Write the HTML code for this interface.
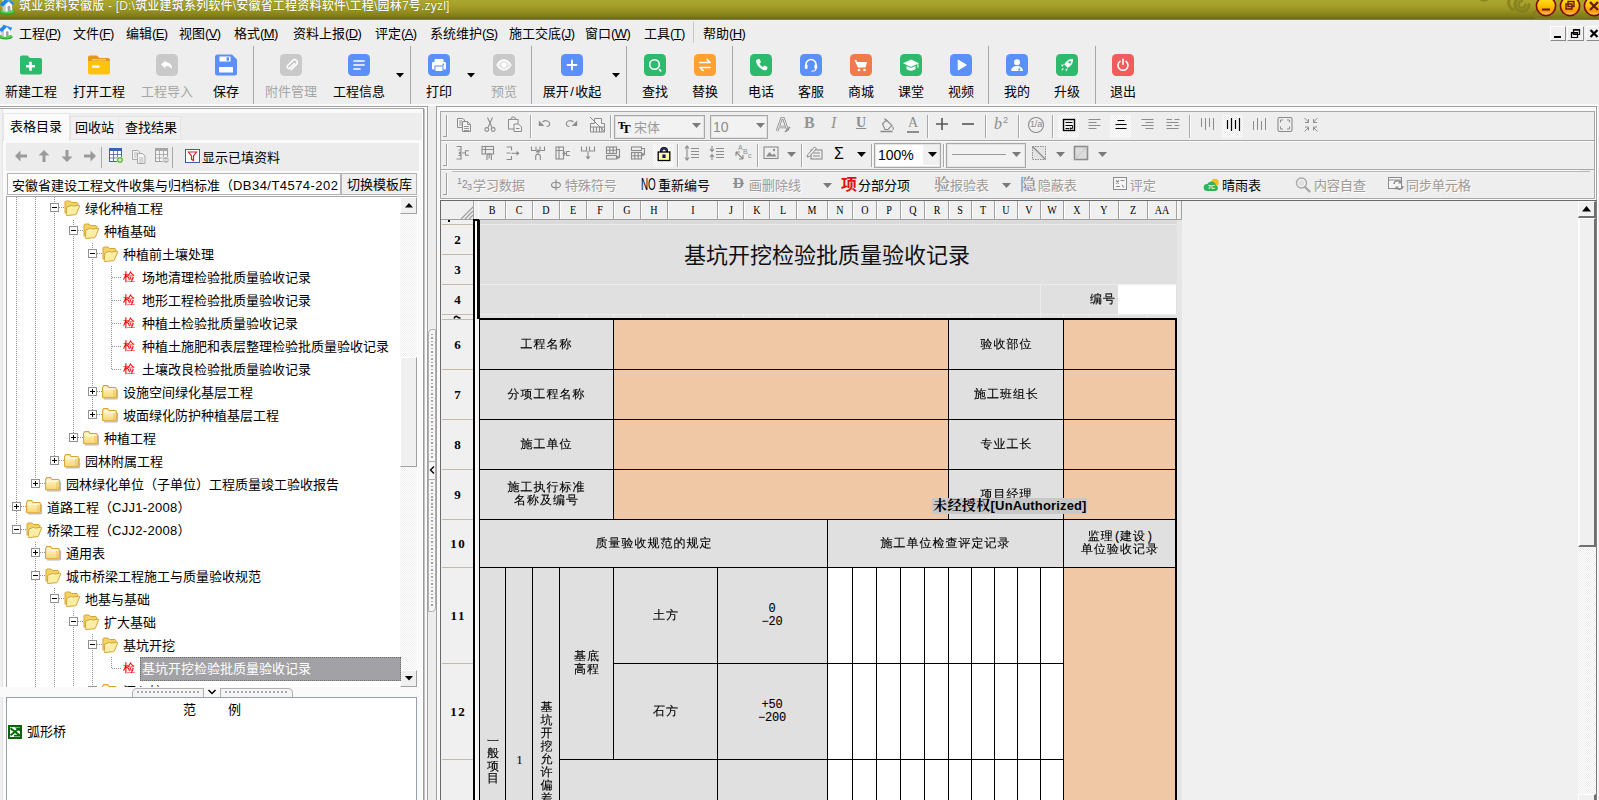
<!DOCTYPE html>
<html lang="zh-CN"><head><meta charset="utf-8"><title>筑业资料安徽版</title>
<style>
html,body{margin:0;padding:0;}
body{width:1599px;height:800px;overflow:hidden;position:relative;background:#f0f0f0;
 font-family:"Liberation Sans","Noto Sans CJK SC",sans-serif;font-size:13px;color:#000;}
div{position:absolute;box-sizing:border-box;}
.t{white-space:nowrap;line-height:1;}
.c{white-space:nowrap;line-height:1;transform:translateX(-50%);}
svg{position:absolute;overflow:visible;}
.song{font-family:"Liberation Serif","Noto Serif CJK SC",serif;font-weight:500;}
.bm{font-family:"Liberation Mono","WenQuanYi Zen Hei","Noto Sans CJK SC",sans-serif;-webkit-text-stroke:.12px currentColor;}
</style></head>
<body>
<div style="left:0px;top:0px;width:1599px;height:20px;background:linear-gradient(#aba62e 0%,#a49f28 30%,#928d1f 60%,#7f7b17 82%,#6d6a1e 93%,#8e8e74 100%);"></div>
<div style="left:0px;top:20px;width:1599px;height:25px;background:#eeeeee;"></div>
<div style="left:0px;top:45px;width:1599px;height:61px;background:#eeeeee;"></div>
<div style="left:0px;top:104px;width:1599px;height:2px;background:#fafafa;"></div>
<div style="left:0px;top:106px;width:1599px;height:2px;background:#ededed;"></div>
<div style="left:0px;top:106px;width:428px;height:1px;background:#a0a0a0;"></div>
<div style="left:0px;top:107px;width:427px;height:1px;background:#ffffff;"></div>
<div style="left:0px;top:108px;width:428px;height:692px;background:#f0f0f0;"></div>
<div style="left:436px;top:106px;width:1161px;height:694px;background:#fafafa;border:1px solid #a0a0a0;border-bottom:none;"></div>
<svg style="left:0px;top:-1px" width="16.0" height="16.0" viewBox="0 0 16 16"><ellipse cx="7.300" cy="13" rx="7.500" ry="2.700" fill="#2a9a2a"/><ellipse cx="7.300" cy="12.400" rx="7" ry="2.200" fill="#4fd04f"/><path d="M2.200 6.500L5.200 4.500L5.600 13L2.600 11.500Z" fill="#c9c9d6"/><path d="M5.200 5L8.500 1.800L12 4.500L12.200 11L5.600 13Z" fill="#fdfdfd"/><path d="M7.600 8.200c.3-1.600 2.300-2 2.700-.5L10.500 11.500L7.800 12.300Z" fill="#9c9cae"/><path d="M-.2 5.600L4.600 -.4L14.200 3L12.600 6.200L8.600 2.300L3.200 7.600Z" fill="#1f86ea"/><path d="M4.600 -.4L14.200 3L13.800 3.800L4.300 .6Z" fill="#4aa4f4"/><path d="M2.400 -1h1.600v2.500l-1.600 1.500Z" fill="#e8e8ee"/></svg>
<div class="t" style="left:19px;top:0px;color:#fff;font-size:12px;font-weight:500;letter-spacing:.2px;text-shadow:0 0 1px rgba(60,60,0,.8);">筑业资料安徽版 - [D:\筑业建筑系列软件\安徽省工程资料软件\工程\园林7号.zyzl]</div>
<svg style="left:1460px;top:0" width="139" height="20" viewBox="1460 0 139 20"><g fill="none" stroke="#827d1d" stroke-linecap="round" opacity=".8"><path d="M1529 4.500a7 7 0 1 1-7-7" stroke-width="3.200"/><path d="M1525.500 4.500a3.500 3.500 0 1 1-3.500-3.500" stroke-width="2.400"/><path d="M1509.500 -1c-2 4-.5 8 3 10.500" stroke-width="3"/><path d="M1480 -1q4 3 8 0" stroke-width="2"/><path d="M1540 12.500a3.500 3.500 0 1 0-3 5.500q20 1.500 62 -2" stroke-width="2"/></g></svg>
<svg style="left:1535px;top:-5.500px" width="22" height="22" viewBox="-11 -11 22 22"><defs><linearGradient id="yb1546" x1="0" y1="0" x2="0" y2="1"><stop offset="0" stop-color="#ffe838"/><stop offset=".45" stop-color="#ffc600"/><stop offset=".78" stop-color="#ff9a00"/><stop offset="1" stop-color="#ffdc98"/></linearGradient></defs><circle r="9.600" fill="url(#yb1546)" stroke="#7a0c08" stroke-width="1.600"/><rect x="-4" y="2.5" width="8" height="2" fill="#6a1a00"/></svg>
<svg style="left:1559px;top:-5.500px" width="22" height="22" viewBox="-11 -11 22 22"><defs><linearGradient id="yb1570" x1="0" y1="0" x2="0" y2="1"><stop offset="0" stop-color="#ffe838"/><stop offset=".45" stop-color="#ffc600"/><stop offset=".78" stop-color="#ff9a00"/><stop offset="1" stop-color="#ffdc98"/></linearGradient></defs><circle r="9.600" fill="url(#yb1570)" stroke="#7a0c08" stroke-width="1.600"/><path d="M-2 -4.5h6v5h-6z M-4 -2h6v5h-6z" fill="none" stroke="#6a1a00" stroke-width="1.4"/></svg>
<svg style="left:1583px;top:-5.500px" width="22" height="22" viewBox="-11 -11 22 22"><defs><linearGradient id="yb1594" x1="0" y1="0" x2="0" y2="1"><stop offset="0" stop-color="#ffe838"/><stop offset=".45" stop-color="#ffc600"/><stop offset=".78" stop-color="#ff9a00"/><stop offset="1" stop-color="#ffdc98"/></linearGradient></defs><circle r="9.600" fill="url(#yb1594)" stroke="#7a0c08" stroke-width="1.600"/><path d="M-4 -4L4 4M4 -4L-4 4" stroke="#6a1a00" stroke-width="2.4"/></svg>
<svg style="left:-1px;top:25px" width="14.72" height="14.72" viewBox="0 0 16 16"><ellipse cx="7.300" cy="13" rx="7.500" ry="2.700" fill="#2a9a2a"/><ellipse cx="7.300" cy="12.400" rx="7" ry="2.200" fill="#4fd04f"/><path d="M2.200 6.500L5.200 4.500L5.600 13L2.600 11.500Z" fill="#c9c9d6"/><path d="M5.200 5L8.500 1.800L12 4.500L12.200 11L5.600 13Z" fill="#fdfdfd"/><path d="M7.600 8.200c.3-1.600 2.300-2 2.700-.5L10.500 11.500L7.800 12.300Z" fill="#9c9cae"/><path d="M-.2 5.600L4.600 -.4L14.200 3L12.600 6.200L8.600 2.300L3.200 7.600Z" fill="#1f86ea"/><path d="M4.600 -.4L14.200 3L13.800 3.800L4.300 .6Z" fill="#4aa4f4"/><path d="M2.400 -1h1.600v2.500l-1.600 1.500Z" fill="#e8e8ee"/></svg>
<div class="t" style="left:19px;top:27px;font-size:13px;">工程<span style="letter-spacing:-.6px">(<u>P</u>)</span></div>
<div class="t" style="left:73px;top:27px;font-size:13px;">文件<span style="letter-spacing:-.6px">(<u>F</u>)</span></div>
<div class="t" style="left:126px;top:27px;font-size:13px;">编辑<span style="letter-spacing:-.6px">(<u>E</u>)</span></div>
<div class="t" style="left:179px;top:27px;font-size:13px;">视图<span style="letter-spacing:-.6px">(<u>V</u>)</span></div>
<div class="t" style="left:234px;top:27px;font-size:13px;">格式<span style="letter-spacing:-.6px">(<u>M</u>)</span></div>
<div class="t" style="left:293px;top:27px;font-size:13px;">资料上报<span style="letter-spacing:-.6px">(<u>D</u>)</span></div>
<div class="t" style="left:375px;top:27px;font-size:13px;">评定<span style="letter-spacing:-.6px">(<u>A</u>)</span></div>
<div class="t" style="left:430px;top:27px;font-size:13px;">系统维护<span style="letter-spacing:-.6px">(<u>S</u>)</span></div>
<div class="t" style="left:509px;top:27px;font-size:13px;">施工交底<span style="letter-spacing:-.6px">(<u>J</u>)</span></div>
<div class="t" style="left:585px;top:27px;font-size:13px;">窗口<span style="letter-spacing:-.6px">(<u>W</u>)</span></div>
<div class="t" style="left:644px;top:27px;font-size:13px;">工具<span style="letter-spacing:-.6px">(<u>T</u>)</span></div>
<div class="t" style="left:703px;top:27px;font-size:13px;">帮助<span style="letter-spacing:-.6px">(<u>H</u>)</span></div>
<div style="left:693px;top:22px;width:1px;height:21px;background:#c8c8c8;"></div>
<div style="left:1550px;top:26px;width:16px;height:15px;background:#f0f0f0;border-right:1px solid #8a8a8a;border-bottom:1px solid #8a8a8a;border-top:1px solid #fff;border-left:1px solid #fff;"><svg style="left:0;top:-1px" width="16" height="15"><rect x="3" y="10" width="7" height="2" fill="#000"/></svg></div>
<div style="left:1567px;top:26px;width:17px;height:15px;background:#f0f0f0;border-right:1px solid #8a8a8a;border-bottom:1px solid #8a8a8a;border-top:1px solid #fff;border-left:1px solid #fff;"><svg style="left:0;top:-1px" width="17" height="15"><path d="M5.5 3.5h6v5h-6z M3.5 6.500h6v5h-6z" fill="#f0f0f0" stroke="#000" stroke-width="1.2"/><path d="M5.5 4h6 M3.500 7h6" stroke="#000" stroke-width="1.6"/></svg></div>
<div style="left:1586px;top:26px;width:14px;height:15px;background:#f0f0f0;border-right:1px solid #8a8a8a;border-bottom:1px solid #8a8a8a;border-top:1px solid #fff;border-left:1px solid #fff;"><svg style="left:0;top:-1px" width="14" height="15"><path d="M3.5 4L10.5 11M10.5 4L3.500 11" stroke="#000" stroke-width="2.2"/></svg></div>
<svg style="left:20px;top:54px" width="22" height="22" viewBox="0 0 22 22"><path d="M0 3.5a2 2 0 0 1 2-2h5.500l2.500 2.500h10a2 2 0 0 1 2 2v12.500a2 2 0 0 1-2 2h-18a2 2 0 0 1-2-2z" fill="#2dba6c"/><path d="M10.500 7.700v9M6 12.200h9" stroke="#fff" stroke-width="2.600" fill="none"/></svg>
<div class="c" style="left:31px;top:85px;font-size:13px;color:#000;">新建工程</div>
<svg style="left:88px;top:54px" width="22" height="22" viewBox="0 0 22 22"><path d="M0 3.500a2 2 0 0 1 2-2h7l2.500 2.500h8.500a2 2 0 0 1 2 2v3h-22z" fill="#e39a12"/><path d="M0 7h22v11.500a2 2 0 0 1-2 2h-18a2 2 0 0 1-2-2z" fill="#ffc20e"/><rect x="4" y="11.500" width="7.500" height="2.200" fill="#fff"/><rect x="4" y="5.300" width="14" height="1" fill="#fbe3a6"/></svg>
<div class="c" style="left:99px;top:85px;font-size:13px;color:#000;">打开工程</div>
<svg style="left:156px;top:54px" width="22" height="22" viewBox="0 0 22 22"><rect x="0" y="0" width="22" height="22" rx="4.5" fill="#c9c9c9"/><path d="M9.500 6.500L5 10.500l4.500 4v-2.600c3.500-.2 5.500 1 6.500 3.600c.3-4.500-2-7.200-6.500-7.600z" fill="#fff"/></svg>
<div class="c" style="left:167px;top:85px;font-size:13px;color:#a6a6a6;">工程导入</div>
<svg style="left:215px;top:54px" width="22" height="22" viewBox="0 0 22 22"><path d="M0 3a2.500 2.500 0 0 1 2.500-2.500h14.500l5 5v13.500a2.500 2.500 0 0 1-2.500 2.500h-17a2.500 2.500 0 0 1-2.500-2.500z" fill="#5b8ff9"/><rect x="4.500" y="2.500" width="11" height="5" fill="#fff"/><rect x="11.500" y="3.300" width="2.500" height="3.400" fill="#5b8ff9"/><rect x="4" y="13" width="14" height="5.500" fill="#fff"/></svg>
<div class="c" style="left:226px;top:85px;font-size:13px;color:#000;">保存</div>
<svg style="left:280px;top:54px" width="22" height="22" viewBox="0 0 22 22"><rect x="0" y="0" width="22" height="22" rx="4.5" fill="#c9c9c9"/><path d="M14.500 9.500l-4.600 4.600a1.700 1.700 0 0 1-2.400-2.400l5.400-5.400a2.700 2.700 0 0 1 3.800 3.800l-5.600 5.600" fill="none" stroke="#fff" stroke-linecap="round" stroke-linejoin="round" stroke-width="1.500"/></svg>
<div class="c" style="left:291px;top:85px;font-size:13px;color:#a6a6a6;">附件管理</div>
<svg style="left:348px;top:54px" width="22" height="22" viewBox="0 0 22 22"><rect x="0" y="0" width="22" height="22" rx="4.5" fill="#5b8ff9"/><path d="M6 7h10M6 11h10M6 15h6" fill="none" stroke="#fff" stroke-linecap="round" stroke-linejoin="round" stroke-width="1.700"/></svg>
<div class="c" style="left:359px;top:85px;font-size:13px;color:#000;">工程信息</div>
<svg style="left:428px;top:54px" width="22" height="22" viewBox="0 0 22 22"><rect x="0" y="0" width="22" height="22" rx="4.5" fill="#5b8ff9"/><rect x="6.500" y="5" width="9" height="4" rx=".8" fill="#fff"/><rect x="4" y="8" width="14" height="7.500" rx="1.300" fill="#fff"/><rect x="7" y="12" width="8" height="5.500" fill="#fff" stroke="#5b8ff9" stroke-width="1"/><circle cx="15.300" cy="10.300" r=".9" fill="#5b8ff9"/></svg>
<div class="c" style="left:439px;top:85px;font-size:13px;color:#000;">打印</div>
<svg style="left:493px;top:54px" width="22" height="22" viewBox="0 0 22 22"><rect x="0" y="0" width="22" height="22" rx="4.5" fill="#c9c9c9"/><path d="M4 11c2-3.500 4.500-5 7-5s5 1.500 7 5c-2 3.500-4.500 5-7 5s-5-1.500-7-5z" fill="#e9e9e9" stroke="#fff" stroke-width="1.300"/><circle cx="11" cy="11" r="2.300" fill="#fff"/></svg>
<div class="c" style="left:504px;top:85px;font-size:13px;color:#a6a6a6;">预览</div>
<svg style="left:561px;top:54px" width="22" height="22" viewBox="0 0 22 22"><rect x="0" y="0" width="22" height="22" rx="4.5" fill="#5b8ff9"/><path d="M11 6.500v9M6.500 11h9" fill="none" stroke="#fff" stroke-linecap="round" stroke-linejoin="round" stroke-width="1.800"/></svg>
<div class="c" style="left:572px;top:85px;font-size:13px;color:#000;">展开<span style="padding:0 1.500px">/</span>收起</div>
<svg style="left:644px;top:54px" width="22" height="22" viewBox="0 0 22 22"><rect x="0" y="0" width="22" height="22" rx="4.5" fill="#2dba6c"/><circle cx="10.500" cy="10.500" r="4.800" fill="none" stroke="#fff" stroke-linecap="round" stroke-linejoin="round" stroke-width="1.600"/><path d="M15.500 15.700l1.200 1.200" fill="none" stroke="#fff" stroke-linecap="round" stroke-linejoin="round" stroke-width="1.800"/></svg>
<div class="c" style="left:655px;top:85px;font-size:13px;color:#000;">查找</div>
<svg style="left:694px;top:54px" width="22" height="22" viewBox="0 0 22 22"><rect x="0" y="0" width="22" height="22" rx="4.5" fill="#ffa033"/><path d="M6 8.500h10M13 5.500l3 3M16 13.500h-10M9 16.500l-3-3" fill="none" stroke="#fff" stroke-linecap="round" stroke-linejoin="round" stroke-width="1.700"/></svg>
<div class="c" style="left:705px;top:85px;font-size:13px;color:#000;">替换</div>
<svg style="left:750px;top:54px" width="22" height="22" viewBox="0 0 22 22"><rect x="0" y="0" width="22" height="22" rx="4.5" fill="#2dba6c"/><path d="M7.300 5.500l2.200-.6 1.500 3.300-1.500 1.200c.8 1.700 1.900 2.800 3.600 3.600l1.200-1.500 3.300 1.500-.6 2.200c-.3.900-1.100 1.300-2 1.100-4.600-1-8-4.400-9-9-.2-.9.300-1.600 1.300-1.800z" fill="#fff"/></svg>
<div class="c" style="left:761px;top:85px;font-size:13px;color:#000;">电话</div>
<svg style="left:800px;top:54px" width="22" height="22" viewBox="0 0 22 22"><rect x="0" y="0" width="22" height="22" rx="4.5" fill="#5b8ff9"/><path d="M6 12.500v-2a5 5 0 0 1 10 0v2" fill="none" stroke="#fff" stroke-linecap="round" stroke-linejoin="round" stroke-width="1.600"/><rect x="4.800" y="10.500" width="2.800" height="4.500" rx="1.200" fill="#fff"/><rect x="14.400" y="10.500" width="2.800" height="4.500" rx="1.200" fill="#fff"/><path d="M15.800 15c0 1.500-1.500 2.200-3.800 2.200" fill="none" stroke="#fff" stroke-linecap="round" stroke-linejoin="round" stroke-width="1.200"/></svg>
<div class="c" style="left:811px;top:85px;font-size:13px;color:#000;">客服</div>
<svg style="left:850px;top:54px" width="22" height="22" viewBox="0 0 22 22"><rect x="0" y="0" width="22" height="22" rx="4.5" fill="#f07a4a"/><path d="M4.500 6h2l.6 2h10l-1.600 5.500h-7.600z" fill="#fff"/><circle cx="9" cy="16" r="1.300" fill="#fff"/><circle cx="14.500" cy="16" r="1.300" fill="#fff"/></svg>
<div class="c" style="left:861px;top:85px;font-size:13px;color:#000;">商城</div>
<svg style="left:900px;top:54px" width="22" height="22" viewBox="0 0 22 22"><rect x="0" y="0" width="22" height="22" rx="4.5" fill="#2dba6c"/><path d="M11 5.500l8 3.700-8 3.700-8-3.700z" fill="#fff"/><path d="M6.500 12v3c1.300 1.200 2.800 1.700 4.500 1.700s3.200-.5 4.500-1.700v-3l-4.500 2.100z" fill="#fff"/><rect x="17.400" y="9.400" width="1" height="4.500" fill="#fff"/></svg>
<div class="c" style="left:911px;top:85px;font-size:13px;color:#000;">课堂</div>
<svg style="left:950px;top:54px" width="22" height="22" viewBox="0 0 22 22"><rect x="0" y="0" width="22" height="22" rx="4.5" fill="#5b8ff9"/><path d="M8.300 6.300l7.700 4.700-7.700 4.700z" fill="#fff" stroke="#fff" stroke-width="1.200" stroke-linejoin="round"/></svg>
<div class="c" style="left:961px;top:85px;font-size:13px;color:#000;">视频</div>
<svg style="left:1006px;top:54px" width="22" height="22" viewBox="0 0 22 22"><rect x="0" y="0" width="22" height="22" rx="4.5" fill="#5b8ff9"/><circle cx="11" cy="8.300" r="3" fill="#fff"/><path d="M5 17c.3-3.300 2.600-5 6-5s5.700 1.700 6 5z" fill="#fff"/><path d="M13.200 13.200l1.300 3.300h-2.600z" fill="#5b8ff9"/></svg>
<div class="c" style="left:1017px;top:85px;font-size:13px;color:#000;">我的</div>
<svg style="left:1056px;top:54px" width="22" height="22" viewBox="0 0 22 22"><rect x="0" y="0" width="22" height="22" rx="4.5" fill="#2dba6c"/><path d="M17 5c-4-.3-7 1.700-8.800 5.500l3.300 3.300c3.800-1.800 5.800-4.800 5.500-8.800z" fill="#fff"/><path d="M8 10.300l-3.200.8 1.700 1.700zM11.700 14l-.8 3.200-1.700-1.700z" fill="#fff"/><path d="M5.500 16.500c.2-1.500.8-2.300 2-2.500.2 1.300-.5 2.200-2 2.500z" fill="#fff"/><circle cx="13.700" cy="8.300" r="1.200" fill="#2dba6c"/></svg>
<div class="c" style="left:1067px;top:85px;font-size:13px;color:#000;">升级</div>
<svg style="left:1112px;top:54px" width="22" height="22" viewBox="0 0 22 22"><rect x="0" y="0" width="22" height="22" rx="4.5" fill="#f25c5c"/><path d="M8 7.300a5 5 0 1 0 6 0" fill="none" stroke="#fff" stroke-linecap="round" stroke-linejoin="round" stroke-width="1.600"/><path d="M11 5.300v5" fill="none" stroke="#fff" stroke-linecap="round" stroke-linejoin="round" stroke-width="1.600"/></svg>
<div class="c" style="left:1123px;top:85px;font-size:13px;color:#000;">退出</div>
<div style="left:253px;top:46px;width:1px;height:58px;background:#a8a8a8;"></div>
<div style="left:410px;top:46px;width:1px;height:58px;background:#a8a8a8;"></div>
<div style="left:531px;top:46px;width:1px;height:58px;background:#a8a8a8;"></div>
<div style="left:626px;top:46px;width:1px;height:58px;background:#a8a8a8;"></div>
<div style="left:732px;top:46px;width:1px;height:58px;background:#a8a8a8;"></div>
<div style="left:988px;top:46px;width:1px;height:58px;background:#a8a8a8;"></div>
<div style="left:1095px;top:46px;width:1px;height:58px;background:#a8a8a8;"></div>
<svg style="left:396px;top:73px" width="9" height="5"><path d="M0 0h8l-4 4.500z" fill="#000"/></svg>
<svg style="left:467px;top:73px" width="9" height="5"><path d="M0 0h8l-4 4.500z" fill="#000"/></svg>
<svg style="left:612px;top:73px" width="9" height="5"><path d="M0 0h8l-4 4.500z" fill="#000"/></svg>
<div style="left:0px;top:108px;width:424px;height:1px;background:#a8a8a8;"></div>
<div style="left:0px;top:109px;width:424px;height:691px;background:#fafafa;"></div>
<div style="left:422px;top:109px;width:1px;height:691px;background:#fff;"></div>
<div style="left:423px;top:109px;width:1px;height:691px;background:#9a9a9a;"></div>
<div style="left:424px;top:109px;width:1px;height:691px;background:#c4c4c4;"></div>
<div style="left:425px;top:108px;width:2px;height:692px;background:#fafafa;"></div>
<div style="left:427px;top:106px;width:1px;height:694px;background:#a0a0a0;"></div>
<div style="left:0px;top:109px;width:2px;height:691px;background:#f0f0f0;"></div>
<div style="left:2px;top:109px;width:1px;height:691px;background:#e4e4e4;"></div>
<div style="left:428px;top:106px;width:8px;height:694px;background:#ededed;"></div>
<div style="left:428px;top:329px;width:8px;height:283px;background:#f6f6f6;border:1px solid #b0b0b0;border-radius:4px 0 4px 0;"></div>
<div style="left:431px;top:334px;width:2px;height:126px;background-image:repeating-linear-gradient(#a4a4a4 0 1.500px,#fbfbfb 1.500px 3.500px);"></div>
<div style="left:431px;top:482px;width:2px;height:126px;background-image:repeating-linear-gradient(#a4a4a4 0 1.500px,#fbfbfb 1.500px 3.500px);"></div>
<div style="left:428px;top:461px;width:8px;height:19px;background:#f8f8f8;border:1px solid #b0b0b0;"></div>
<svg style="left:429px;top:465px" width="6" height="10"><path d="M5 1.500L1.500 5L5 8.500" fill="none" stroke="#000" stroke-width="1.400"/></svg>
<div style="left:3px;top:113px;width:419px;height:27px;background:#ededed;"></div>
<div style="left:70px;top:116px;width:49px;height:24px;background:#f1f1f1;border:1px solid #e4e4e4;"></div>
<div style="left:118px;top:116px;width:63px;height:24px;background:#f1f1f1;border:1px solid #e4e4e4;"></div>
<div style="left:3px;top:113px;width:67px;height:28px;background:#fafafa;border:1px solid #e6e6e6;border-bottom:none;"></div>
<div class="t" style="left:10px;top:120px;font-size:13px;">表格目录</div>
<div class="t" style="left:75px;top:121px;font-size:13px;">回收站</div>
<div class="t" style="left:125px;top:121px;font-size:13px;">查找结果</div>
<div style="left:6px;top:143px;width:413px;height:28px;background:#ececec;"></div>
<svg style="left:14px;top:149px" width="14" height="14" viewBox="-7 -7 14 14"><g transform="rotate(0)"><path d="M-6 0L-.5 -5.500v4h6.500v3h-6.500v4z" fill="#9a9a9a"/></g></svg>
<svg style="left:37px;top:149px" width="14" height="14" viewBox="-7 -7 14 14"><g transform="rotate(90)"><path d="M-6 0L-.5 -5.500v4h6.500v3h-6.500v4z" fill="#9a9a9a"/></g></svg>
<svg style="left:60px;top:149px" width="14" height="14" viewBox="-7 -7 14 14"><g transform="rotate(270)"><path d="M-6 0L-.5 -5.500v4h6.500v3h-6.500v4z" fill="#9a9a9a"/></g></svg>
<svg style="left:83px;top:149px" width="14" height="14" viewBox="-7 -7 14 14"><g transform="rotate(180)"><path d="M-6 0L-.5 -5.500v4h6.500v3h-6.500v4z" fill="#9a9a9a"/></g></svg>
<div style="left:101px;top:147px;width:1px;height:21px;background:#a8a8a8;"></div>
<div style="left:172px;top:147px;width:1px;height:21px;background:#a8a8a8;"></div>
<svg style="left:109px;top:148px" width="15" height="16" viewBox="0 0 15 16"><rect x=".5" y=".5" width="12" height="13" fill="#fff" stroke="#3c62b8"/><rect x=".5" y=".5" width="12" height="2.500" fill="#3c62b8"/><path d="M.5 6.500h12M.5 10h12M4.500 3v10.500M8.500 3v10.500" stroke="#3c62b8" stroke-width=".8"/><circle cx="11" cy="12" r="3.300" fill="#54b235" stroke="#fff" stroke-width=".6"/><path d="M11 10.200v3.600M9.200 12h3.600" stroke="#fff" stroke-width="1.100"/></svg>
<svg style="left:132px;top:150px" width="14" height="14" viewBox="0 0 14 14"><path d="M.5 .500h5.500l1.500 1.500v7.500h-7z" fill="#f4f4f4" stroke="#a8a8a8"/><path d="M2 3h3.500M2 5h3.500M2 7h2.500" stroke="#a8a8a8" stroke-width=".8"/><path d="M5.500 3.500h5l2.500 2.500v7.500h-7.500z" fill="#f4f4f4" stroke="#a8a8a8"/><path d="M7 8h4.500M7 10h4.500M7 12h4.500" stroke="#a8a8a8" stroke-width=".8"/></svg>
<svg style="left:155px;top:148px" width="15" height="16" viewBox="0 0 15 16"><rect x=".5" y=".5" width="12" height="13" fill="#f4f4f4" stroke="#a0a0a0"/><rect x=".5" y=".5" width="12" height="2.500" fill="#a8a8a8"/><path d="M.5 6.500h12M.5 10h12M4.500 3v10.500M8.500 3v10.500" stroke="#a0a0a0" stroke-width=".8"/><circle cx="11" cy="12" r="3.300" fill="#b4b4b4" stroke="#fff" stroke-width=".6"/><path d="M9.200 12h3.600" stroke="#fff" stroke-width="1.100"/></svg>
<svg style="left:185px;top:149px" width="15" height="14" viewBox="0 0 15 14"><rect x=".5" y=".5" width="14" height="13" fill="#fff" stroke="#3c5cb0"/><path d="M3.500 3h8l-3 4v4.500l-2-1.200v-3.300z" fill="#fff" stroke="#e02020" stroke-width="1.200"/></svg>
<div class="t" style="left:202px;top:151px;font-size:13px;">显示已填资料</div>
<div style="left:7px;top:173px;width:334px;height:22px;background:#fff;border:1px solid #b4b4b4;"></div>
<div class="t" style="left:12px;top:179px;font-size:13px;width:327px;overflow:hidden;">安徽省建设工程文件收集与归档标准（<span style="letter-spacing:.45px">DB34/T4574-202</span></div>
<div style="left:341px;top:173px;width:76px;height:22px;background:#efefef;border:1px solid #b4b4b4;"></div>
<div class="t" style="left:347px;top:178px;font-size:13px;">切换模板库</div>
<div style="left:6px;top:196px;width:411px;height:492px;background:#fff;border:1px solid #a8a8a8;border-bottom:none;overflow:hidden;"></div>
<div style="left:400px;top:197px;width:17px;height:490px;background-color:#f8f8f8;background-image:repeating-conic-gradient(#efefef 0 25%,#ffffff 0 50%);background-size:2px 2px;"></div>
<div style="left:400px;top:197px;width:17px;height:17px;background:#f0f0f0;border-right:1px solid #a0a0a0;border-bottom:1px solid #a0a0a0;border-left:1px solid #fff;border-top:1px solid #fff;"></div>
<svg style="left:405px;top:203px" width="8" height="5"><path d="M0 4.500h8l-4-4.500z" fill="#000"/></svg>
<div style="left:400px;top:670px;width:17px;height:17px;background:#f0f0f0;border-right:1px solid #a0a0a0;border-bottom:1px solid #a0a0a0;border-left:1px solid #fff;border-top:1px solid #fff;"></div>
<svg style="left:405px;top:676px" width="8" height="5"><path d="M0 0h8l-4 4.500z" fill="#000"/></svg>
<div style="left:400px;top:357px;width:17px;height:110px;background:#f0f0f0;border-right:1px solid #a0a0a0;border-bottom:1px solid #a0a0a0;border-left:1px solid #fff;border-top:1px solid #fff;"></div>
<div style="left:16px;top:197px;width:1px;height:334px;background-image:repeating-linear-gradient(to bottom,#909090 0 1px,transparent 1px 2px);"></div>
<div style="left:35px;top:197px;width:1px;height:288px;background-image:repeating-linear-gradient(to bottom,#909090 0 1px,transparent 1px 2px);"></div>
<div style="left:35px;top:542px;width:1px;height:145px;background-image:repeating-linear-gradient(to bottom,#909090 0 1px,transparent 1px 2px);"></div>
<div style="left:54px;top:197px;width:1px;height:265px;background-image:repeating-linear-gradient(to bottom,#909090 0 1px,transparent 1px 2px);"></div>
<div style="left:54px;top:588px;width:1px;height:99px;background-image:repeating-linear-gradient(to bottom,#909090 0 1px,transparent 1px 2px);"></div>
<div style="left:73px;top:220px;width:1px;height:219px;background-image:repeating-linear-gradient(to bottom,#909090 0 1px,transparent 1px 2px);"></div>
<div style="left:73px;top:611px;width:1px;height:76px;background-image:repeating-linear-gradient(to bottom,#909090 0 1px,transparent 1px 2px);"></div>
<div style="left:92px;top:243px;width:1px;height:173px;background-image:repeating-linear-gradient(to bottom,#909090 0 1px,transparent 1px 2px);"></div>
<div style="left:92px;top:634px;width:1px;height:53px;background-image:repeating-linear-gradient(to bottom,#909090 0 1px,transparent 1px 2px);"></div>
<div style="left:111px;top:266px;width:1px;height:104px;background-image:repeating-linear-gradient(to bottom,#909090 0 1px,transparent 1px 2px);"></div>
<div style="left:111px;top:657px;width:1px;height:12px;background-image:repeating-linear-gradient(to bottom,#909090 0 1px,transparent 1px 2px);"></div>
<div style="left:59px;top:207px;width:5px;height:1px;background-image:repeating-linear-gradient(to right,#909090 0 1px,transparent 1px 2px);"></div>
<div style="left:50px;top:203px;width:9px;height:9px;background:#fff;border:1px solid #919191;"></div>
<div style="left:52px;top:207px;width:5px;height:1px;background:#000;"></div>
<svg style="left:64px;top:200px" width="17" height="17" viewBox="0 0 17 17"><path d="M1 13.500V1.800l.8-.8h4.200l1.500 1.500h5.500l.8.8v3.500" fill="#f3d264" stroke="#d6a437" stroke-width="1"/><path d="M2.800 7.200l4.200-1.700 2.200.6 5.800-.9c.6 0 .8.300.6.800l-3.200 8c-.2.500-.5.700-1 .700l-8.400.800c-.5 0-.8-.300-.7-.800z" fill="#fbeea2" stroke="#d6a437" stroke-width="1"/><path d="M3.800 8.200l3.300-1.300 2 .5" fill="none" stroke="#fffbe0" stroke-width=".8"/></svg>
<div class="t" style="left:85px;top:202px;font-size:13px;">绿化种植工程</div>
<div style="left:78px;top:230px;width:5px;height:1px;background-image:repeating-linear-gradient(to right,#909090 0 1px,transparent 1px 2px);"></div>
<div style="left:69px;top:226px;width:9px;height:9px;background:#fff;border:1px solid #919191;"></div>
<div style="left:71px;top:230px;width:5px;height:1px;background:#000;"></div>
<svg style="left:83px;top:223px" width="17" height="17" viewBox="0 0 17 17"><path d="M1 13.500V1.800l.8-.8h4.200l1.500 1.500h5.500l.8.8v3.500" fill="#f3d264" stroke="#d6a437" stroke-width="1"/><path d="M2.800 7.200l4.200-1.700 2.200.6 5.800-.9c.6 0 .8.300.6.800l-3.200 8c-.2.500-.5.700-1 .700l-8.400.800c-.5 0-.8-.300-.7-.800z" fill="#fbeea2" stroke="#d6a437" stroke-width="1"/><path d="M3.800 8.200l3.300-1.300 2 .5" fill="none" stroke="#fffbe0" stroke-width=".8"/></svg>
<div class="t" style="left:104px;top:225px;font-size:13px;">种植基础</div>
<div style="left:97px;top:253px;width:5px;height:1px;background-image:repeating-linear-gradient(to right,#909090 0 1px,transparent 1px 2px);"></div>
<div style="left:88px;top:249px;width:9px;height:9px;background:#fff;border:1px solid #919191;"></div>
<div style="left:90px;top:253px;width:5px;height:1px;background:#000;"></div>
<svg style="left:102px;top:246px" width="17" height="17" viewBox="0 0 17 17"><path d="M1 13.500V1.800l.8-.8h4.200l1.500 1.500h5.500l.8.8v3.500" fill="#f3d264" stroke="#d6a437" stroke-width="1"/><path d="M2.800 7.200l4.200-1.700 2.200.6 5.800-.9c.6 0 .8.300.6.800l-3.200 8c-.2.500-.5.700-1 .700l-8.400.800c-.5 0-.8-.300-.7-.800z" fill="#fbeea2" stroke="#d6a437" stroke-width="1"/><path d="M3.800 8.200l3.300-1.300 2 .5" fill="none" stroke="#fffbe0" stroke-width=".8"/></svg>
<div class="t" style="left:123px;top:248px;font-size:13px;">种植前土壤处理</div>
<div style="left:112px;top:277px;width:9px;height:1px;background-image:repeating-linear-gradient(to right,#909090 0 1px,transparent 1px 2px);"></div>
<div class="t bm" style="left:123px;top:272px;font-size:12px;color:#f00000;">检</div>
<div class="t" style="left:142px;top:271px;font-size:13px;">场地清理检验批质量验收记录</div>
<div style="left:112px;top:300px;width:9px;height:1px;background-image:repeating-linear-gradient(to right,#909090 0 1px,transparent 1px 2px);"></div>
<div class="t bm" style="left:123px;top:295px;font-size:12px;color:#f00000;">检</div>
<div class="t" style="left:142px;top:294px;font-size:13px;">地形工程检验批质量验收记录</div>
<div style="left:112px;top:323px;width:9px;height:1px;background-image:repeating-linear-gradient(to right,#909090 0 1px,transparent 1px 2px);"></div>
<div class="t bm" style="left:123px;top:318px;font-size:12px;color:#f00000;">检</div>
<div class="t" style="left:142px;top:317px;font-size:13px;">种植土检验批质量验收记录</div>
<div style="left:112px;top:346px;width:9px;height:1px;background-image:repeating-linear-gradient(to right,#909090 0 1px,transparent 1px 2px);"></div>
<div class="t bm" style="left:123px;top:341px;font-size:12px;color:#f00000;">检</div>
<div class="t" style="left:142px;top:340px;font-size:13px;">种植土施肥和表层整理检验批质量验收记录</div>
<div style="left:112px;top:369px;width:9px;height:1px;background-image:repeating-linear-gradient(to right,#909090 0 1px,transparent 1px 2px);"></div>
<div class="t bm" style="left:123px;top:364px;font-size:12px;color:#f00000;">检</div>
<div class="t" style="left:142px;top:363px;font-size:13px;">土壤改良检验批质量验收记录</div>
<div style="left:97px;top:391px;width:5px;height:1px;background-image:repeating-linear-gradient(to right,#909090 0 1px,transparent 1px 2px);"></div>
<div style="left:88px;top:387px;width:9px;height:9px;background:#fff;border:1px solid #919191;"></div>
<div style="left:90px;top:391px;width:5px;height:1px;background:#000;"></div>
<div style="left:92px;top:389px;width:1px;height:5px;background:#000;"></div>
<svg style="left:102px;top:385px" width="17" height="15" viewBox="0 0 17 15"><defs><linearGradient id="fg" x1="0" y1="0" x2="0" y2="1"><stop offset="0" stop-color="#fffbdc"/><stop offset="1" stop-color="#f7d56e"/></linearGradient></defs><path d="M2 13.800h12.500a1 1 0 0 0 1-1V4.500" fill="none" stroke="#b9b9b9" stroke-width="1.200"/><path d="M.6 11.800V2.300l1.200-1.700h3.800l1.500 1.900h6.200a1 1 0 0 1 1 1v8.300a1 1 0 0 1-1 1h-11.700a1 1 0 0 1-1-1z" fill="url(#fg)" stroke="#d9a236" stroke-width="1.100"/><path d="M1.600 4.300h11.700" stroke="#fffbe0" stroke-width=".9"/><path d="M12 4.800v7.500" stroke="#e8b94a" stroke-width=".8"/></svg>
<div class="t" style="left:123px;top:386px;font-size:13px;">设施空间绿化基层工程</div>
<div style="left:97px;top:414px;width:5px;height:1px;background-image:repeating-linear-gradient(to right,#909090 0 1px,transparent 1px 2px);"></div>
<div style="left:88px;top:410px;width:9px;height:9px;background:#fff;border:1px solid #919191;"></div>
<div style="left:90px;top:414px;width:5px;height:1px;background:#000;"></div>
<div style="left:92px;top:412px;width:1px;height:5px;background:#000;"></div>
<svg style="left:102px;top:408px" width="17" height="15" viewBox="0 0 17 15"><defs><linearGradient id="fg" x1="0" y1="0" x2="0" y2="1"><stop offset="0" stop-color="#fffbdc"/><stop offset="1" stop-color="#f7d56e"/></linearGradient></defs><path d="M2 13.800h12.500a1 1 0 0 0 1-1V4.500" fill="none" stroke="#b9b9b9" stroke-width="1.200"/><path d="M.6 11.800V2.300l1.200-1.700h3.800l1.500 1.900h6.200a1 1 0 0 1 1 1v8.300a1 1 0 0 1-1 1h-11.700a1 1 0 0 1-1-1z" fill="url(#fg)" stroke="#d9a236" stroke-width="1.100"/><path d="M1.600 4.300h11.700" stroke="#fffbe0" stroke-width=".9"/><path d="M12 4.800v7.500" stroke="#e8b94a" stroke-width=".8"/></svg>
<div class="t" style="left:123px;top:409px;font-size:13px;">坡面绿化防护种植基层工程</div>
<div style="left:78px;top:437px;width:5px;height:1px;background-image:repeating-linear-gradient(to right,#909090 0 1px,transparent 1px 2px);"></div>
<div style="left:69px;top:433px;width:9px;height:9px;background:#fff;border:1px solid #919191;"></div>
<div style="left:71px;top:437px;width:5px;height:1px;background:#000;"></div>
<div style="left:73px;top:435px;width:1px;height:5px;background:#000;"></div>
<svg style="left:83px;top:431px" width="17" height="15" viewBox="0 0 17 15"><defs><linearGradient id="fg" x1="0" y1="0" x2="0" y2="1"><stop offset="0" stop-color="#fffbdc"/><stop offset="1" stop-color="#f7d56e"/></linearGradient></defs><path d="M2 13.800h12.500a1 1 0 0 0 1-1V4.500" fill="none" stroke="#b9b9b9" stroke-width="1.200"/><path d="M.6 11.800V2.300l1.200-1.700h3.800l1.500 1.900h6.200a1 1 0 0 1 1 1v8.300a1 1 0 0 1-1 1h-11.700a1 1 0 0 1-1-1z" fill="url(#fg)" stroke="#d9a236" stroke-width="1.100"/><path d="M1.600 4.300h11.700" stroke="#fffbe0" stroke-width=".9"/><path d="M12 4.800v7.500" stroke="#e8b94a" stroke-width=".8"/></svg>
<div class="t" style="left:104px;top:432px;font-size:13px;">种植工程</div>
<div style="left:59px;top:460px;width:5px;height:1px;background-image:repeating-linear-gradient(to right,#909090 0 1px,transparent 1px 2px);"></div>
<div style="left:50px;top:456px;width:9px;height:9px;background:#fff;border:1px solid #919191;"></div>
<div style="left:52px;top:460px;width:5px;height:1px;background:#000;"></div>
<div style="left:54px;top:458px;width:1px;height:5px;background:#000;"></div>
<svg style="left:64px;top:454px" width="17" height="15" viewBox="0 0 17 15"><defs><linearGradient id="fg" x1="0" y1="0" x2="0" y2="1"><stop offset="0" stop-color="#fffbdc"/><stop offset="1" stop-color="#f7d56e"/></linearGradient></defs><path d="M2 13.800h12.500a1 1 0 0 0 1-1V4.500" fill="none" stroke="#b9b9b9" stroke-width="1.200"/><path d="M.6 11.800V2.300l1.200-1.700h3.800l1.500 1.900h6.200a1 1 0 0 1 1 1v8.300a1 1 0 0 1-1 1h-11.700a1 1 0 0 1-1-1z" fill="url(#fg)" stroke="#d9a236" stroke-width="1.100"/><path d="M1.600 4.300h11.700" stroke="#fffbe0" stroke-width=".9"/><path d="M12 4.800v7.500" stroke="#e8b94a" stroke-width=".8"/></svg>
<div class="t" style="left:85px;top:455px;font-size:13px;">园林附属工程</div>
<div style="left:40px;top:483px;width:5px;height:1px;background-image:repeating-linear-gradient(to right,#909090 0 1px,transparent 1px 2px);"></div>
<div style="left:31px;top:479px;width:9px;height:9px;background:#fff;border:1px solid #919191;"></div>
<div style="left:33px;top:483px;width:5px;height:1px;background:#000;"></div>
<div style="left:35px;top:481px;width:1px;height:5px;background:#000;"></div>
<svg style="left:45px;top:477px" width="17" height="15" viewBox="0 0 17 15"><defs><linearGradient id="fg" x1="0" y1="0" x2="0" y2="1"><stop offset="0" stop-color="#fffbdc"/><stop offset="1" stop-color="#f7d56e"/></linearGradient></defs><path d="M2 13.800h12.500a1 1 0 0 0 1-1V4.500" fill="none" stroke="#b9b9b9" stroke-width="1.200"/><path d="M.6 11.800V2.300l1.200-1.700h3.800l1.500 1.900h6.200a1 1 0 0 1 1 1v8.300a1 1 0 0 1-1 1h-11.700a1 1 0 0 1-1-1z" fill="url(#fg)" stroke="#d9a236" stroke-width="1.100"/><path d="M1.600 4.300h11.700" stroke="#fffbe0" stroke-width=".9"/><path d="M12 4.800v7.500" stroke="#e8b94a" stroke-width=".8"/></svg>
<div class="t" style="left:66px;top:478px;font-size:13px;">园林绿化单位（子单位）工程质量竣工验收报告</div>
<div style="left:21px;top:506px;width:5px;height:1px;background-image:repeating-linear-gradient(to right,#909090 0 1px,transparent 1px 2px);"></div>
<div style="left:12px;top:502px;width:9px;height:9px;background:#fff;border:1px solid #919191;"></div>
<div style="left:14px;top:506px;width:5px;height:1px;background:#000;"></div>
<div style="left:16px;top:504px;width:1px;height:5px;background:#000;"></div>
<svg style="left:26px;top:500px" width="17" height="15" viewBox="0 0 17 15"><defs><linearGradient id="fg" x1="0" y1="0" x2="0" y2="1"><stop offset="0" stop-color="#fffbdc"/><stop offset="1" stop-color="#f7d56e"/></linearGradient></defs><path d="M2 13.800h12.500a1 1 0 0 0 1-1V4.500" fill="none" stroke="#b9b9b9" stroke-width="1.200"/><path d="M.6 11.800V2.300l1.200-1.700h3.800l1.500 1.900h6.200a1 1 0 0 1 1 1v8.300a1 1 0 0 1-1 1h-11.700a1 1 0 0 1-1-1z" fill="url(#fg)" stroke="#d9a236" stroke-width="1.100"/><path d="M1.600 4.300h11.700" stroke="#fffbe0" stroke-width=".9"/><path d="M12 4.800v7.500" stroke="#e8b94a" stroke-width=".8"/></svg>
<div class="t" style="left:47px;top:501px;font-size:13px;">道路工程（<span style="letter-spacing:.3px">CJJ1-2008</span>）</div>
<div style="left:21px;top:529px;width:5px;height:1px;background-image:repeating-linear-gradient(to right,#909090 0 1px,transparent 1px 2px);"></div>
<div style="left:12px;top:525px;width:9px;height:9px;background:#fff;border:1px solid #919191;"></div>
<div style="left:14px;top:529px;width:5px;height:1px;background:#000;"></div>
<svg style="left:26px;top:522px" width="17" height="17" viewBox="0 0 17 17"><path d="M1 13.500V1.800l.8-.8h4.200l1.500 1.500h5.500l.8.8v3.500" fill="#f3d264" stroke="#d6a437" stroke-width="1"/><path d="M2.800 7.200l4.200-1.700 2.200.6 5.800-.9c.6 0 .8.300.6.800l-3.200 8c-.2.500-.5.700-1 .700l-8.400.800c-.5 0-.8-.300-.7-.800z" fill="#fbeea2" stroke="#d6a437" stroke-width="1"/><path d="M3.800 8.200l3.300-1.300 2 .5" fill="none" stroke="#fffbe0" stroke-width=".8"/></svg>
<div class="t" style="left:47px;top:524px;font-size:13px;">桥梁工程（<span style="letter-spacing:.3px">CJJ2-2008</span>）</div>
<div style="left:40px;top:552px;width:5px;height:1px;background-image:repeating-linear-gradient(to right,#909090 0 1px,transparent 1px 2px);"></div>
<div style="left:31px;top:548px;width:9px;height:9px;background:#fff;border:1px solid #919191;"></div>
<div style="left:33px;top:552px;width:5px;height:1px;background:#000;"></div>
<div style="left:35px;top:550px;width:1px;height:5px;background:#000;"></div>
<svg style="left:45px;top:546px" width="17" height="15" viewBox="0 0 17 15"><defs><linearGradient id="fg" x1="0" y1="0" x2="0" y2="1"><stop offset="0" stop-color="#fffbdc"/><stop offset="1" stop-color="#f7d56e"/></linearGradient></defs><path d="M2 13.800h12.500a1 1 0 0 0 1-1V4.500" fill="none" stroke="#b9b9b9" stroke-width="1.200"/><path d="M.6 11.800V2.300l1.200-1.700h3.800l1.500 1.900h6.200a1 1 0 0 1 1 1v8.300a1 1 0 0 1-1 1h-11.700a1 1 0 0 1-1-1z" fill="url(#fg)" stroke="#d9a236" stroke-width="1.100"/><path d="M1.600 4.300h11.700" stroke="#fffbe0" stroke-width=".9"/><path d="M12 4.800v7.500" stroke="#e8b94a" stroke-width=".8"/></svg>
<div class="t" style="left:66px;top:547px;font-size:13px;">通用表</div>
<div style="left:40px;top:575px;width:5px;height:1px;background-image:repeating-linear-gradient(to right,#909090 0 1px,transparent 1px 2px);"></div>
<div style="left:31px;top:571px;width:9px;height:9px;background:#fff;border:1px solid #919191;"></div>
<div style="left:33px;top:575px;width:5px;height:1px;background:#000;"></div>
<svg style="left:45px;top:568px" width="17" height="17" viewBox="0 0 17 17"><path d="M1 13.500V1.800l.8-.8h4.200l1.500 1.500h5.500l.8.8v3.500" fill="#f3d264" stroke="#d6a437" stroke-width="1"/><path d="M2.800 7.200l4.200-1.700 2.200.6 5.800-.9c.6 0 .8.300.6.800l-3.200 8c-.2.500-.5.700-1 .700l-8.400.800c-.5 0-.8-.300-.7-.800z" fill="#fbeea2" stroke="#d6a437" stroke-width="1"/><path d="M3.800 8.200l3.300-1.300 2 .5" fill="none" stroke="#fffbe0" stroke-width=".8"/></svg>
<div class="t" style="left:66px;top:570px;font-size:13px;">城市桥梁工程施工与质量验收规范</div>
<div style="left:59px;top:598px;width:5px;height:1px;background-image:repeating-linear-gradient(to right,#909090 0 1px,transparent 1px 2px);"></div>
<div style="left:50px;top:594px;width:9px;height:9px;background:#fff;border:1px solid #919191;"></div>
<div style="left:52px;top:598px;width:5px;height:1px;background:#000;"></div>
<svg style="left:64px;top:591px" width="17" height="17" viewBox="0 0 17 17"><path d="M1 13.500V1.800l.8-.8h4.200l1.500 1.500h5.500l.8.8v3.500" fill="#f3d264" stroke="#d6a437" stroke-width="1"/><path d="M2.800 7.200l4.200-1.700 2.200.6 5.800-.9c.6 0 .8.300.6.800l-3.200 8c-.2.500-.5.700-1 .700l-8.400.800c-.5 0-.8-.300-.7-.800z" fill="#fbeea2" stroke="#d6a437" stroke-width="1"/><path d="M3.800 8.200l3.300-1.300 2 .5" fill="none" stroke="#fffbe0" stroke-width=".8"/></svg>
<div class="t" style="left:85px;top:593px;font-size:13px;">地基与基础</div>
<div style="left:78px;top:621px;width:5px;height:1px;background-image:repeating-linear-gradient(to right,#909090 0 1px,transparent 1px 2px);"></div>
<div style="left:69px;top:617px;width:9px;height:9px;background:#fff;border:1px solid #919191;"></div>
<div style="left:71px;top:621px;width:5px;height:1px;background:#000;"></div>
<svg style="left:83px;top:614px" width="17" height="17" viewBox="0 0 17 17"><path d="M1 13.500V1.800l.8-.8h4.200l1.500 1.500h5.500l.8.8v3.500" fill="#f3d264" stroke="#d6a437" stroke-width="1"/><path d="M2.800 7.200l4.200-1.700 2.200.6 5.800-.9c.6 0 .8.300.6.800l-3.200 8c-.2.500-.5.700-1 .700l-8.400.800c-.5 0-.8-.300-.7-.800z" fill="#fbeea2" stroke="#d6a437" stroke-width="1"/><path d="M3.800 8.200l3.300-1.300 2 .5" fill="none" stroke="#fffbe0" stroke-width=".8"/></svg>
<div class="t" style="left:104px;top:616px;font-size:13px;">扩大基础</div>
<div style="left:97px;top:644px;width:5px;height:1px;background-image:repeating-linear-gradient(to right,#909090 0 1px,transparent 1px 2px);"></div>
<div style="left:88px;top:640px;width:9px;height:9px;background:#fff;border:1px solid #919191;"></div>
<div style="left:90px;top:644px;width:5px;height:1px;background:#000;"></div>
<svg style="left:102px;top:637px" width="17" height="17" viewBox="0 0 17 17"><path d="M1 13.500V1.800l.8-.8h4.200l1.500 1.500h5.500l.8.8v3.500" fill="#f3d264" stroke="#d6a437" stroke-width="1"/><path d="M2.800 7.200l4.200-1.700 2.200.6 5.800-.9c.6 0 .8.300.6.800l-3.200 8c-.2.500-.5.700-1 .700l-8.400.800c-.5 0-.8-.300-.7-.800z" fill="#fbeea2" stroke="#d6a437" stroke-width="1"/><path d="M3.800 8.200l3.300-1.300 2 .5" fill="none" stroke="#fffbe0" stroke-width=".8"/></svg>
<div class="t" style="left:123px;top:639px;font-size:13px;">基坑开挖</div>
<div style="left:112px;top:668px;width:9px;height:1px;background-image:repeating-linear-gradient(to right,#909090 0 1px,transparent 1px 2px);"></div>
<div style="left:140px;top:657px;width:261px;height:24px;background:#a2a2a6;border:1px dotted #6a6a6a;"></div>
<div class="t bm" style="left:123px;top:663px;font-size:12px;color:#f00000;">检</div>
<div class="t" style="left:142px;top:662px;font-size:13px;color:#fff;">基坑开挖检验批质量验收记录</div>
<div style="left:97px;top:690px;width:5px;height:1px;background-image:repeating-linear-gradient(to right,#909090 0 1px,transparent 1px 2px);"></div>
<div style="left:88px;top:686px;width:9px;height:9px;background:#fff;border:1px solid #919191;"></div>
<div style="left:90px;top:690px;width:5px;height:1px;background:#000;"></div>
<div style="left:92px;top:688px;width:1px;height:5px;background:#000;"></div>
<svg style="left:102px;top:684px" width="17" height="15" viewBox="0 0 17 15"><defs><linearGradient id="fg" x1="0" y1="0" x2="0" y2="1"><stop offset="0" stop-color="#fffbdc"/><stop offset="1" stop-color="#f7d56e"/></linearGradient></defs><path d="M2 13.800h12.500a1 1 0 0 0 1-1V4.500" fill="none" stroke="#b9b9b9" stroke-width="1.200"/><path d="M.6 11.800V2.300l1.200-1.700h3.800l1.500 1.900h6.200a1 1 0 0 1 1 1v8.300a1 1 0 0 1-1 1h-11.700a1 1 0 0 1-1-1z" fill="url(#fg)" stroke="#d9a236" stroke-width="1.100"/><path d="M1.600 4.300h11.700" stroke="#fffbe0" stroke-width=".9"/><path d="M12 4.800v7.500" stroke="#e8b94a" stroke-width=".8"/></svg>
<div class="t" style="left:123px;top:685px;font-size:13px;">沉入桩</div>
<div style="left:0px;top:687px;width:422px;height:10px;background:#fafafa;"></div>
<div style="left:132px;top:688px;width:161px;height:9px;background:#f4f4f4;border:1px solid #b0b0b0;border-radius:5px 5px 0 0;border-bottom:none;"></div>
<div style="left:137px;top:691px;width:62px;height:2px;background-image:repeating-linear-gradient(to right,#a8a8a8 0 2px,#f8f8f8 2px 4px);"></div>
<div style="left:225px;top:691px;width:62px;height:2px;background-image:repeating-linear-gradient(to right,#a8a8a8 0 2px,#f8f8f8 2px 4px);"></div>
<div style="left:203px;top:688px;width:18px;height:9px;background:#f8f8f8;border-left:1px solid #b0b0b0;border-right:1px solid #b0b0b0;"></div>
<svg style="left:207px;top:689px" width="10" height="6"><path d="M1.500 1L5 4.500L8.500 1" fill="none" stroke="#000" stroke-width="1.500"/></svg>
<div style="left:6px;top:697px;width:411px;height:103px;background:#fff;border:1px solid #9aa0a8;border-bottom:none;"></div>
<div class="t" style="left:183px;top:703px;font-size:13px;">范</div>
<div class="t" style="left:228px;top:703px;font-size:13px;">例</div>
<svg style="left:8px;top:725px" width="14" height="14" viewBox="0 0 14 14"><rect x="1" y="1" width="12" height="12" fill="#fff" stroke="#0a640a" stroke-width="2"/><path d="M2.500 3.200L11.500 10.300M11.500 3.200L2.500 10.300" stroke="#0a640a" stroke-width="2"/><path d="M6.500 2.500h5.500v4z" fill="#0a640a"/><rect x="6" y="9.800" width="6.500" height="1.700" fill="#0a640a"/></svg>
<div class="t" style="left:27px;top:725px;font-size:13px;">弧形桥</div>
<div style="left:440px;top:111px;width:1155px;height:88px;background:#eeeeee;border:1px solid #a8a8a8;"></div>
<div style="left:441px;top:140px;width:1153px;height:1px;background:#a8a8a8;"></div>
<div style="left:441px;top:141px;width:1153px;height:1px;background:#fafafa;"></div>
<div style="left:441px;top:169px;width:1153px;height:1px;background:#a8a8a8;"></div>
<div style="left:441px;top:170px;width:1140px;height:1px;background:#fafafa;"></div>
<div style="left:452px;top:171px;width:1138px;height:1px;background:#b8b8b8;"></div>
<div style="left:446px;top:115px;width:1px;height:22px;background:#a0a0a0;"></div>
<div style="left:447px;top:115px;width:1px;height:22px;background:#fbfbfb;"></div>
<div style="left:443px;top:136px;width:4px;height:1px;background:#a0a0a0;"></div>
<div style="left:446px;top:144px;width:1px;height:22px;background:#a0a0a0;"></div>
<div style="left:447px;top:144px;width:1px;height:22px;background:#fbfbfb;"></div>
<div style="left:443px;top:165px;width:4px;height:1px;background:#a0a0a0;"></div>
<div style="left:446px;top:173px;width:1px;height:22px;background:#a0a0a0;"></div>
<div style="left:447px;top:173px;width:1px;height:22px;background:#fbfbfb;"></div>
<div style="left:443px;top:194px;width:4px;height:1px;background:#a0a0a0;"></div>
<svg style="left:455.0px;top:116.0px" width="18" height="18" viewBox="-9.0 -9.0 18 18"><path d="M-6.500 -6.500h5.500l1.500 1.500v7.500h-7z" fill="#f2f2f2" stroke="#8c8c8c"/><path d="M-5 -4h3.500M-5 -2h3.500M-5 0h3" stroke="#8c8c8c" stroke-width=".9"/><path d="M-1.500 -3.500h5l3 3v7h-8z" fill="#f2f2f2" stroke="#8c8c8c"/><path d="M3.500 -3.500v3h3" fill="none" stroke="#8c8c8c" stroke-width=".9"/><path d="M0 1.500h5M0 3.500h5M0 5.500h5" stroke="#8c8c8c" stroke-width=".9"/></svg>
<svg style="left:481.0px;top:116.0px" width="18" height="18" viewBox="-9.0 -9.0 18 18"><path d="M-2.500 -7.500L2 2.500M2.500 -7.500L-2 2.500" fill="none" stroke="#8c8c8c" stroke-width="1.100"/><circle cx="-3.200" cy="4.500" r="1.900" fill="none" stroke="#8c8c8c" stroke-width="1.100"/><circle cx="3.200" cy="4.500" r="1.900" fill="none" stroke="#8c8c8c" stroke-width="1.100"/></svg>
<svg style="left:506.0px;top:116.0px" width="18" height="18" viewBox="-9.0 -9.0 18 18"><rect x="-6.500" y="-5.500" width="9.500" height="9.500" fill="#f2f2f2" stroke="#8c8c8c"/><path d="M-4 -5.500v-1.500h1.200v-1h2.100v1h1.200v1.500z" fill="#f2f2f2" stroke="#8c8c8c" stroke-width=".9"/><path d="M-1 -1h4.500l3 3v4.500h-7.500z" fill="#f2f2f2" stroke="#8c8c8c"/><path d="M1 3.500h3.500" stroke="#8c8c8c" stroke-width="1"/></svg>
<div style="left:530px;top:115px;width:1px;height:23px;background:#a8a8a8;"></div>
<div style="left:531px;top:115px;width:1px;height:23px;background:#fbfbfb;"></div>
<svg style="left:536.0px;top:116.0px" width="18" height="18" viewBox="-9.0 -9.0 18 18"><path d="M-2.500 -3c2.500-2 6-1.800 7 .8c.7 2-.5 3.500-3 3.700" fill="none" stroke="#8c8c8c" stroke-width="1.100"/><path d="M-6.200 -4.500v5.500h5.500z" fill="#8c8c8c"/></svg>
<svg style="left:562.0px;top:116.0px" width="18" height="18" viewBox="-9.0 -9.0 18 18"><path d="M2.500 -3c-2.500-2-6-1.800-7 .8c-.7 2 .5 3.500 3 3.700" fill="none" stroke="#8c8c8c" stroke-width="1.100"/><path d="M6.200 -4.500v5.500h-5.500z" fill="#8c8c8c"/></svg>
<svg style="left:588.0px;top:116.0px" width="18" height="18" viewBox="-9.0 -9.0 18 18"><path d="M-6.500 7v-8.500h4v-5h7v5h3v8.500z" fill="#f2f2f2" stroke="#8c8c8c"/><path d="M-6.500 2h14M-3.500 2v5M-.5 2v5M2.500 2v5M5 2v5" fill="none" stroke="#8c8c8c" stroke-width="1.100"/><path d="M-7 -8l14.500 14.500" stroke="#8c8c8c" stroke-width="1"/></svg>
<div style="left:610px;top:115px;width:1px;height:23px;background:#a8a8a8;"></div>
<div style="left:611px;top:115px;width:1px;height:23px;background:#fbfbfb;"></div>
<div style="left:614px;top:115px;width:91px;height:24px;background:#f2f2f2;border:1px solid #a8a8a8;"></div>
<div style="left:615px;top:116px;width:89px;height:22px;border:1px solid #e2e2e2;"></div>
<div class="t" style="left:618px;top:120px;font-size:11px;font-family:Liberation Serif,serif;"><b>T</b></div>
<div class="t" style="left:622px;top:122px;font-size:13px;font-family:Liberation Serif,serif;"><b>T</b></div>
<div class="t" style="left:634px;top:121px;font-size:13px;color:#9a9a9a;">宋体</div>
<svg style="left:692px;top:123px" width="9" height="5"><path d="M0 0h9l-4.500 5z" fill="#7a7a7a"/></svg>
<div style="left:710px;top:115px;width:58px;height:24px;background:#f2f2f2;border:1px solid #a8a8a8;"></div>
<div style="left:711px;top:116px;width:56px;height:22px;border:1px solid #e2e2e2;"></div>
<div class="t" style="left:713px;top:120px;font-size:14px;color:#8c8c8c;">10</div>
<svg style="left:756px;top:123px" width="9" height="5"><path d="M0 0h9l-4.500 5z" fill="#7a7a7a"/></svg>
<svg style="left:774.0px;top:116.0px" width="18" height="18" viewBox="-9.0 -9.0 18 18"><path d="M-6 6L-1.500 -6.500h2L5 6M-4 2h6.500" fill="none" stroke="#8c8c8c" stroke-width="2.600"/><path d="M-6 6L-1.500 -6.500h2L5 6M-4 2h6.500" fill="none" stroke="#f0f0f0" stroke-width="1"/><path d="M2 7l5-5" stroke="#8c8c8c" stroke-width="1.500"/></svg>
<div class="t" style="left:804px;top:115px;font-size:16px;color:#949494;font-family:Liberation Serif,serif;"><b>B</b></div>
<div class="t" style="left:831px;top:115px;font-size:16px;color:#949494;font-family:Liberation Serif,serif;"><i>I</i></div>
<div class="t" style="left:856px;top:116px;font-size:14px;color:#8c8c8c;font-family:Liberation Serif,serif;"><b><u>U</u></b></div>
<svg style="left:878.0px;top:116.0px" width="18" height="18" viewBox="-9.0 -9.0 18 18"><path d="M-4.500 -1l4-4 5.500 5.500-4 4h-3z" fill="none" stroke="#8c8c8c" stroke-width="1.100"/><path d="M-2.500 -6.500l3 3" fill="none" stroke="#8c8c8c" stroke-width="1.100"/><path d="M5.500 1.500c1.200 1.500 1.200 2.500 0 3.200" fill="none" stroke="#8c8c8c" stroke-width="1.100"/><path d="M-6.500 6.500h12" stroke="#8c8c8c" stroke-width="1.600"/></svg>
<div class="t" style="left:908px;top:116px;font-size:14px;color:#8c8c8c;font-family:Liberation Serif,serif;">A</div>
<div style="left:907px;top:131px;width:12px;height:2px;background:#8c8c8c;"></div>
<div style="left:927px;top:115px;width:1px;height:23px;background:#a8a8a8;"></div>
<div style="left:928px;top:115px;width:1px;height:23px;background:#fbfbfb;"></div>
<svg style="left:933.0px;top:115.0px" width="18" height="18" viewBox="-9.0 -9.0 18 18"><path d="M-6 0h12M0 -6v12" stroke="#555" stroke-width="1.600"/></svg>
<svg style="left:959.0px;top:115.0px" width="18" height="18" viewBox="-9.0 -9.0 18 18"><path d="M-6 0h12" stroke="#555" stroke-width="1.600"/></svg>
<div style="left:985px;top:115px;width:1px;height:23px;background:#a8a8a8;"></div>
<div style="left:986px;top:115px;width:1px;height:23px;background:#fbfbfb;"></div>
<div class="t" style="left:994px;top:116px;font-size:16px;color:#8c8c8c;font-family:Liberation Serif,serif;"><i>b</i></div>
<div class="t" style="left:1003px;top:116px;font-size:9px;color:#8c8c8c;">2</div>
<div style="left:1018px;top:115px;width:1px;height:23px;background:#a8a8a8;"></div>
<div style="left:1019px;top:115px;width:1px;height:23px;background:#fbfbfb;"></div>
<svg style="left:1027.0px;top:116.0px" width="18" height="18" viewBox="-9.0 -9.0 18 18"><circle r="7.500" fill="none" stroke="#8c8c8c" stroke-width="1.100"/></svg>
<div class="c" style="left:1036px;top:120px;font-size:9px;color:#8c8c8c;letter-spacing:-.2px;">1/a</div>
<div style="left:1052px;top:115px;width:1px;height:23px;background:#a8a8a8;"></div>
<div style="left:1053px;top:115px;width:1px;height:23px;background:#fbfbfb;"></div>
<div style="left:1058px;top:115px;width:21px;height:23px;background-color:#f6f6f6;background-image:repeating-conic-gradient(#ffffff 0 25%,#ececec 0 50%);background-size:2px 2px;"></div>
<svg style="left:1060.0px;top:116.0px" width="18" height="18" viewBox="-9.0 -9.0 18 18"><rect x="-5.500" y="-5.500" width="11" height="11" fill="none" stroke="#000" stroke-width="1.400"/><path d="M-3.500 -2.500h7M-3.500 .5h7M-3.500 3.500h3.500" stroke="#000" stroke-width="1.100"/><path d="M3.500 .5v3h-2.500M2 2.300l-1.200 1.200 1.200 1.200" fill="none" stroke="#000" stroke-width=".9"/></svg>
<svg style="left:1085.0px;top:116.0px" width="18" height="18" viewBox="-9.0 -9.0 18 18"><path d="M-5.500 -5.500h12M-5.500 -2.500h8M-5.500 .5h12M-5.500 3.500h8" stroke="#8c8c8c" stroke-width="1"/></svg>
<div style="left:1110px;top:115px;width:21px;height:23px;background-color:#f6f6f6;background-image:repeating-conic-gradient(#ffffff 0 25%,#ececec 0 50%);background-size:2px 2px;"></div>
<svg style="left:1112.0px;top:116.0px" width="18" height="18" viewBox="-9.0 -9.0 18 18"><path d="M-3.500 -4.500h7M-5.500 -.5h11M-5.500 3.500h11" stroke="#000" stroke-width="1.050"/></svg>
<svg style="left:1138.0px;top:116.0px" width="18" height="18" viewBox="-9.0 -9.0 18 18"><path d="M-5.500 -5.500h12M-1.500 -2.500h8M-5.500 .5h12M-1.500 3.500h8" stroke="#8c8c8c" stroke-width="1"/></svg>
<svg style="left:1164.0px;top:116.0px" width="18" height="18" viewBox="-9.0 -9.0 18 18"><path d="M-6.500 -5.500h5.500M1.500 -5.500h5M-6.500 -2.500h12M-6.500 .5h5.500M1.500 .5h5M-6.500 3.500h12" stroke="#8c8c8c" stroke-width="1"/></svg>
<div style="left:1189px;top:115px;width:1px;height:23px;background:#a8a8a8;"></div>
<div style="left:1190px;top:115px;width:1px;height:23px;background:#fbfbfb;"></div>
<svg style="left:1198.0px;top:116.0px" width="18" height="18" viewBox="-9.0 -9.0 18 18"><path d="M-5.500 -7v9M-1.500 -7v12M2.500 -7v9M6.500 -7v12" stroke="#8c8c8c" stroke-width="1"/></svg>
<div style="left:1222px;top:115px;width:21px;height:23px;background-color:#f6f6f6;background-image:repeating-conic-gradient(#ffffff 0 25%,#ececec 0 50%);background-size:2px 2px;"></div>
<svg style="left:1224.0px;top:116.0px" width="18" height="18" viewBox="-9.0 -9.0 18 18"><path d="M-5.500 -5v9M-1.500 -7v13M2.500 -5v9M6.500 -7v13" stroke="#000" stroke-width="1.200"/></svg>
<svg style="left:1250.0px;top:116.0px" width="18" height="18" viewBox="-9.0 -9.0 18 18"><path d="M-5.500 -4v9M-1.500 -7v12M2.500 -4v9M6.500 -7v12" stroke="#8c8c8c" stroke-width="1"/></svg>
<svg style="left:1276.0px;top:116.0px" width="18" height="18" viewBox="-9.0 -9.0 18 18"><rect x="-7" y="-7.500" width="14" height="14" rx="1.500" fill="none" stroke="#8c8c8c" stroke-width="1.100"/><path d="M-4.500 -2.500v-2.500h2.500M2 -5h2.500v2.500M4.500 1.500v2.500h-2.500M-2 4h-2.500v-2.500" fill="none" stroke="#8c8c8c" stroke-width="1"/></svg>
<svg style="left:1302.0px;top:116.0px" width="18" height="18" viewBox="-9.0 -9.0 18 18"><path d="M-6.500 -7l4 4M-2.500 -6v3.500h-3.500M6.500 -7l-4 4M2.500 -6v3.500h3.500M-6.500 6.500l4-4M-2.500 5.500v-3.500h-3.500M6.500 6.500l-4-4M2.500 5.500v-3.500h3.500" fill="none" stroke="#8c8c8c" stroke-width="1"/></svg>
<svg style="left:454.0px;top:144.0px" width="18" height="18" viewBox="-9.0 -9.0 18 18"><path d="M-6.500 -6.500h4.500v3.500h-2.500M-6.500 6h4.500v-3.500h-2.500" fill="none" stroke="#8c8c8c" stroke-width="1.100"/><path d="M6 -2.200h-3.500v4.400h3.500" fill="none" stroke="#8c8c8c" stroke-width="1.100"/><path d="M2.500 0h-6M-1.500 -2.200l-2.300 2.200 2.300 2.200" fill="none" stroke="#8c8c8c" stroke-width="1.100"/></svg>
<svg style="left:479.0px;top:144.0px" width="18" height="18" viewBox="-9.0 -9.0 18 18"><rect x="-6" y="-6.500" width="11.500" height="7.500" fill="none" stroke="#8c8c8c" stroke-width="1.100"/><path d="M-6 -3.500h11.500M-2.500 -6.500v7.500" fill="none" stroke="#8c8c8c" stroke-width="1.100"/><path d="M-1 7v-4a2.200 2.200 0 0 1 4.400 0v4" fill="none" stroke="#8c8c8c" stroke-width="1.100"/><path d="M1.200 5.500v-3.500" fill="none" stroke="#8c8c8c" stroke-width="1.100"/></svg>
<svg style="left:504.0px;top:144.0px" width="18" height="18" viewBox="-9.0 -9.0 18 18"><path d="M-6.500 -6h5v3.500M-6.500 6.500h5v-3.500M-6.500 0h4" fill="none" stroke="#8c8c8c" stroke-width="1.100"/><path d="M-1.500 .3h7.500" fill="none" stroke="#8c8c8c" stroke-width="1.100"/><path d="M3.500 -2.200l3 2.500-3 2.500z" fill="#8c8c8c"/></svg>
<svg style="left:529.0px;top:144.0px" width="18" height="18" viewBox="-9.0 -9.0 18 18"><path d="M-6.500 -6.500v4h4.500v-4M2 -6.500v4h4.500v-4" fill="none" stroke="#8c8c8c" stroke-width="1.100"/><path d="M0 -3.500v5.500M-2 -.5l2-2.500 2 2.500" fill="none" stroke="#8c8c8c" stroke-width="1.100"/><path d="M-2.300 7v-3.500a2.300 2.300 0 0 1 4.600 0v3.500" fill="none" stroke="#8c8c8c" stroke-width="1.100"/></svg>
<svg style="left:554.0px;top:144.0px" width="18" height="18" viewBox="-9.0 -9.0 18 18"><rect x="-7" y="-6" width="7.500" height="12" fill="none" stroke="#8c8c8c" stroke-width="1.100"/><path d="M-7 -2.500h7.500M-4 -6v12" fill="none" stroke="#8c8c8c" stroke-width="1.100"/><path d="M7 -1.500h-3.500v4h3.500" fill="none" stroke="#8c8c8c" stroke-width="1.100"/><path d="M3.500 .5h-3M2 -1.300l-2 1.800 2 1.800" fill="none" stroke="#8c8c8c" stroke-width="1.100"/></svg>
<svg style="left:579.0px;top:144.0px" width="18" height="18" viewBox="-9.0 -9.0 18 18"><path d="M-6.500 -6.500v4.500h5v-4.500M1.500 -6.500v4.500h5v-4.500" fill="none" stroke="#8c8c8c" stroke-width="1.100"/><path d="M0 -2v6" fill="none" stroke="#8c8c8c" stroke-width="1.100"/><path d="M-2.500 3.500l2.500 3 2.500-3z" fill="#8c8c8c"/></svg>
<svg style="left:604.0px;top:144.0px" width="18" height="18" viewBox="-9.0 -9.0 18 18"><rect x="-6.500" y="-6" width="10" height="6.500" fill="none" stroke="#8c8c8c" stroke-width="1.100"/><path d="M-6.500 -2.800h10M-3.200 -6v6.500M.2 -6v6.500" fill="none" stroke="#8c8c8c" stroke-width="1.100"/><rect x="-6.500" y="2.500" width="10" height="3.500" fill="none" stroke="#8c8c8c" stroke-width="1.100"/><path d="M3.500 -3.500h3v8h-2.500M5.500 3l-1.800 1.500 1.800 1.500" fill="none" stroke="#8c8c8c" stroke-width="1.100"/></svg>
<svg style="left:629.0px;top:144.0px" width="18" height="18" viewBox="-9.0 -9.0 18 18"><rect x="-6.500" y="-6" width="10" height="3.500" fill="none" stroke="#8c8c8c" stroke-width="1.100"/><rect x="-6.500" y="-.5" width="10" height="6.500" fill="none" stroke="#8c8c8c" stroke-width="1.100"/><path d="M-6.500 2.800h10M-3.200 -.5v6.500M.2 -.5v6.500" fill="none" stroke="#8c8c8c" stroke-width="1.100"/><path d="M3.500 -4.500h3v6h-2.500M5.500 0l-1.800 1.500 1.800 1.500" fill="none" stroke="#8c8c8c" stroke-width="1.100"/></svg>
<div style="left:653px;top:144px;width:21px;height:23px;background-color:#f6f6f6;background-image:repeating-conic-gradient(#ffffff 0 25%,#ececec 0 50%);background-size:2px 2px;"></div>
<svg style="left:655.0px;top:144.0px" width="18" height="18" viewBox="-9.0 -9.0 18 18"><path d="M-2.800 -1v-1a2.800 2.800 0 0 1 5.600 0v1" fill="none" stroke="#000" stroke-width="2.400"/><path d="M-2.800 -1v-1a2.800 2.800 0 0 1 5.600 0v1" fill="none" stroke="#4860e0" stroke-width=".7"/><rect x="-5.800" y="-1" width="11.600" height="8.500" fill="#ffffa8" stroke="#000" stroke-width="1.300"/><rect x="-1.600" y="1.500" width="3.200" height="3.500" fill="#101070"/></svg>
<div style="left:677px;top:144px;width:1px;height:23px;background:#a8a8a8;"></div>
<div style="left:678px;top:144px;width:1px;height:23px;background:#fbfbfb;"></div>
<svg style="left:683.0px;top:144.0px" width="18" height="18" viewBox="-9.0 -9.0 18 18"><path d="M-5 -6.500v13M-7 -4.500l2-2.500 2 2.500M-7 4.500l2 2.500 2-2.500" fill="none" stroke="#8c8c8c" stroke-width="1.100"/><path d="M-1 -4.500h8M-1 -1.500h8M-1 1.500h8M-1 4.500h8" fill="none" stroke="#8c8c8c" stroke-width="1.100"/></svg>
<svg style="left:708.0px;top:144.0px" width="18" height="18" viewBox="-9.0 -9.0 18 18"><path d="M-5 -7v5M-7 -4l2 2.500 2-2.500M-5 7v-5M-7 4l2-2.500 2 2.500" fill="none" stroke="#8c8c8c" stroke-width="1.100"/><path d="M-1 -4.500h8M-1 -1.500h8M-1 1.500h8M-1 4.500h8" fill="none" stroke="#8c8c8c" stroke-width="1.100"/></svg>
<svg style="left:733.0px;top:144.0px" width="18" height="18" viewBox="-9.0 -9.0 18 18"><path d="M-6 -1l7 7M-6 -1v4M-6 -1h4M1 6v-4M1 6h-4" fill="none" stroke="#8c8c8c" stroke-width="1.100"/></svg>
<div class="t" style="left:738px;top:144px;font-size:7px;color:#8c8c8c;">A</div>
<div class="t" style="left:743px;top:148px;font-size:7px;color:#8c8c8c;">B</div>
<div class="t" style="left:748px;top:152px;font-size:7px;color:#8c8c8c;">c</div>
<div style="left:757px;top:144px;width:1px;height:23px;background:#a8a8a8;"></div>
<div style="left:758px;top:144px;width:1px;height:23px;background:#fbfbfb;"></div>
<svg style="left:762.0px;top:144.0px" width="18" height="18" viewBox="-9.0 -9.0 18 18"><rect x="-7" y="-6" width="14" height="11.500" fill="none" stroke="#8c8c8c" stroke-width="1.100"/><path d="M-5 3.500l3.500-4.500 3 3 1.500-1.500 2.500 3z" fill="#8c8c8c"/><circle cx="3" cy="-3" r="1.200" fill="#8c8c8c"/></svg>
<svg style="left:787px;top:152px" width="9" height="5"><path d="M0 0h9l-4.500 5z" fill="#7a7a7a"/></svg>
<div style="left:801px;top:144px;width:1px;height:23px;background:#a8a8a8;"></div>
<div style="left:802px;top:144px;width:1px;height:23px;background:#fbfbfb;"></div>
<svg style="left:806.0px;top:144.0px" width="18" height="18" viewBox="-9.0 -9.0 18 18"><rect x="-4" y="-3" width="11" height="9" fill="none" stroke="#8c8c8c" stroke-width="1.100"/><path d="M-2 0h7M-2 3h7" fill="none" stroke="#8c8c8c" stroke-width="1.100"/><path d="M-7.500 2l7-8 2 1.500-7 8-2.500.500z" fill="#f0f0f0" stroke="#8c8c8c" stroke-width="1"/></svg>
<div class="t" style="left:834px;top:146px;font-size:16px;color:#000;">Σ</div>
<svg style="left:857px;top:152px" width="9" height="5"><path d="M0 0h9l-4.500 5z" fill="#000"/></svg>
<div style="left:871px;top:144px;width:1px;height:23px;background:#a8a8a8;"></div>
<div style="left:872px;top:144px;width:1px;height:23px;background:#fbfbfb;"></div>
<div style="left:943px;top:144px;width:1px;height:23px;background:#a8a8a8;"></div>
<div style="left:944px;top:144px;width:1px;height:23px;background:#fbfbfb;"></div>
<div style="left:874px;top:143px;width:67px;height:25px;background:#fff;border:1px solid #a8a8a8;box-shadow:inset 0 0 0 1px #e4e4e4;"></div>
<div class="t" style="left:878px;top:148px;font-size:14px;color:#000;">100%</div>
<div style="left:923px;top:145px;width:16px;height:20px;background:#f0f0f0;"></div>
<svg style="left:928px;top:152px" width="9" height="5"><path d="M0 0h9l-4.500 5z" fill="#000"/></svg>
<div style="left:946px;top:143px;width:80px;height:25px;background:#f2f2f2;border:1px solid #a8a8a8;box-shadow:inset 0 0 0 1px #e4e4e4;"></div>
<div style="left:952px;top:154px;width:54px;height:1px;background:#9a9a9a;"></div>
<svg style="left:1012px;top:152px" width="9" height="5"><path d="M0 0h9l-4.500 5z" fill="#7a7a7a"/></svg>
<svg style="left:1030.0px;top:144.0px" width="18" height="18" viewBox="-9.0 -9.0 18 18"><rect x="-6.500" y="-6.500" width="13" height="13" fill="#e4e4e4" stroke="#8c8c8c" stroke-dasharray="1.500 1"/><path d="M-6.500 -6.500l13 13" stroke="#8c8c8c" stroke-width="1.300"/></svg>
<svg style="left:1056px;top:152px" width="9" height="5"><path d="M0 0h9l-4.500 5z" fill="#7a7a7a"/></svg>
<svg style="left:1072.0px;top:144.0px" width="18" height="18" viewBox="-9.0 -9.0 18 18"><rect x="-6.500" y="-6.500" width="13" height="13" fill="#dcdcdc" stroke="#8c8c8c" stroke-width="1.600"/><path d="M-6.500 6.500l13-13" stroke="#c4c4c4" stroke-width="1"/></svg>
<svg style="left:1098px;top:152px" width="9" height="5"><path d="M0 0h9l-4.500 5z" fill="#7a7a7a"/></svg>
<div class="t" style="left:457px;top:177px;font-size:9px;color:#8c8c8c;">1</div>
<div class="t" style="left:462px;top:180px;font-size:10px;color:#8c8c8c;">2</div>
<div class="t" style="left:467px;top:183px;font-size:9px;color:#8c8c8c;">3</div>
<div class="t" style="left:473px;top:179px;font-size:13px;color:#9c9c9c;text-shadow:1px 1px 0 #fff,-.5px 0 0 rgba(225,170,110,.35);">学习数据</div>
<svg style="left:550px;top:179px" width="12" height="12" viewBox="-6 -6 12 12"><ellipse rx="4.500" ry="2.800" fill="none" stroke="#8c8c8c" stroke-width="1.100"/><path d="M0 -5.500v11" fill="none" stroke="#8c8c8c" stroke-width="1.100"/></svg>
<div class="t" style="left:565px;top:179px;font-size:13px;color:#9c9c9c;text-shadow:1px 1px 0 #fff,-.5px 0 0 rgba(225,170,110,.35);">特殊符号</div>
<div class="t" style="left:641px;top:176px;font-size:17px;transform:scaleX(.58);transform-origin:0 0;">NO</div>
<div class="t" style="left:658px;top:179px;font-size:13px;">重新编号</div>
<div class="t" style="left:733px;top:176px;font-size:15px;color:#8c8c8c;font-family:Liberation Serif,serif;"><b><s>D</s></b></div>
<div class="t" style="left:749px;top:179px;font-size:13px;color:#9c9c9c;text-shadow:1px 1px 0 #fff,-.5px 0 0 rgba(225,170,110,.35);">画删除线</div>
<svg style="left:823px;top:183px" width="9" height="5"><path d="M0 0h9l-4.500 5z" fill="#7a7a7a"/></svg>
<div class="t" style="left:841px;top:177px;font-size:16px;color:#e01010;"><b>项</b></div>
<div class="t" style="left:858px;top:179px;font-size:13px;">分部分项</div>
<div class="t song" style="left:934px;top:177px;font-size:16px;color:#8c8c8c;">验</div>
<div class="t" style="left:950px;top:179px;font-size:13px;color:#9c9c9c;text-shadow:1px 1px 0 #fff,-.5px 0 0 rgba(225,170,110,.35);">报验表</div>
<svg style="left:1002px;top:183px" width="9" height="5"><path d="M0 0h9l-4.500 5z" fill="#7a7a7a"/></svg>
<div class="t song" style="left:1020px;top:177px;font-size:16px;color:#8c8c8c;">隐</div>
<div class="t" style="left:1038px;top:179px;font-size:13px;color:#9c9c9c;text-shadow:1px 1px 0 #fff,-.5px 0 0 rgba(225,170,110,.35);">隐蔽表</div>
<svg style="left:1113px;top:177px" width="15" height="14" viewBox="0 0 15 14"><rect x=".5" y=".5" width="13" height="12" fill="#f6f6f6" stroke="#8c8c8c"/><path d="M3 3.500l3 3M6 3.500l-3 3M7.500 3.500h4M3 9.500h4M9 8l2 2.500" fill="none" stroke="#8c8c8c" stroke-width="1.100"/></svg>
<div class="t" style="left:1130px;top:179px;font-size:13px;color:#9c9c9c;text-shadow:1px 1px 0 #fff,-.5px 0 0 rgba(225,170,110,.35);">评定</div>
<svg style="left:1203px;top:178px" width="18" height="14" viewBox="0 0 18 14"><circle cx="12" cy="4.500" r="3.800" fill="#f4c020"/><path d="M4 13a3.500 3.500 0 0 1 .3-7a4.500 4.500 0 0 1 8.500 1.200a3 3 0 0 1 0 5.800z" fill="#2fb45c"/><text x="8.500" y="11.300" font-size="5.500" fill="#fff" text-anchor="middle" font-family="Liberation Sans,sans-serif" font-weight="bold">7C</text></svg>
<div class="t" style="left:1222px;top:179px;font-size:13px;">晴雨表</div>
<svg style="left:1295px;top:177px" width="16" height="16" viewBox="0 0 16 16"><circle cx="6.500" cy="6" r="5" fill="#f4f4f4" stroke="#a8a8a8" stroke-width="1.400"/><circle cx="6.500" cy="6" r="3" fill="#e0e0e0"/><path d="M10 10l4.500 4.500" stroke="#a8a8a8" stroke-width="2.400" stroke-linecap="round"/></svg>
<div class="t" style="left:1314px;top:179px;font-size:13px;color:#9c9c9c;text-shadow:1px 1px 0 #fff,-.5px 0 0 rgba(225,170,110,.35);">内容自查</div>
<svg style="left:1388px;top:176px" width="17" height="16" viewBox="0 0 17 16"><rect x=".5" y="1.500" width="13" height="11" fill="#f6f6f6" stroke="#8c8c8c"/><path d="M.5 4h13" stroke="#8c8c8c"/><path d="M6 8a3.500 3.500 0 0 1 6.500-1.500M15 10a3.500 3.500 0 0 1-6.500 1.500" fill="none" stroke="#8c8c8c" stroke-width="1.500"/><path d="M13.500 4v3.500h-3.500zM7.500 14v-3.500h3.500z" fill="#8c8c8c"/></svg>
<div class="t" style="left:1406px;top:179px;font-size:13px;color:#9c9c9c;text-shadow:1px 1px 0 #fff,-.5px 0 0 rgba(225,170,110,.35);">同步单元格</div>
<div style="left:440px;top:200px;width:1156px;height:600px;background:#f0f0f0;border-left:1px solid #696969;border-top:1px solid #696969;"></div>
<div style="left:1596px;top:107px;width:1px;height:693px;background:#a0a0a0;"></div>
<div style="left:1597px;top:107px;width:1px;height:693px;background:#fff;"></div>
<div style="left:441px;top:201px;width:741px;height:18px;background:#f0f0f0;"></div>
<div style="left:441px;top:219px;width:741px;height:1px;background:#a0a0a0;"></div>
<div style="left:473px;top:201px;width:1px;height:18px;background:#a0a0a0;"></div>
<div style="left:474px;top:201px;width:1px;height:18px;background:#fff;"></div>
<div style="left:478px;top:201px;width:1px;height:18px;background:#fff;"></div>
<svg style="left:460px;top:207px" width="13" height="12"><path d="M1 12L13 0M5 12L13 4M9 12L13 8" stroke="#a0a0a0" stroke-width="1.300" fill="none"/></svg>
<div style="left:505px;top:201px;width:1px;height:18px;background:#a0a0a0;"></div>
<div style="left:506px;top:201px;width:1px;height:18px;background:#fff;"></div>
<div class="song" style="left:472.0px;width:40px;text-align:center;top:204px;font-size:12px;line-height:1;transform:scaleX(.84);">B</div>
<div style="left:532px;top:201px;width:1px;height:18px;background:#a0a0a0;"></div>
<div style="left:533px;top:201px;width:1px;height:18px;background:#fff;"></div>
<div class="song" style="left:499.0px;width:40px;text-align:center;top:204px;font-size:12px;line-height:1;transform:scaleX(.84);">C</div>
<div style="left:559px;top:201px;width:1px;height:18px;background:#a0a0a0;"></div>
<div style="left:560px;top:201px;width:1px;height:18px;background:#fff;"></div>
<div class="song" style="left:526.0px;width:40px;text-align:center;top:204px;font-size:12px;line-height:1;transform:scaleX(.84);">D</div>
<div style="left:586px;top:201px;width:1px;height:18px;background:#a0a0a0;"></div>
<div style="left:587px;top:201px;width:1px;height:18px;background:#fff;"></div>
<div class="song" style="left:553.0px;width:40px;text-align:center;top:204px;font-size:12px;line-height:1;transform:scaleX(.84);">E</div>
<div style="left:613px;top:201px;width:1px;height:18px;background:#a0a0a0;"></div>
<div style="left:614px;top:201px;width:1px;height:18px;background:#fff;"></div>
<div class="song" style="left:580.0px;width:40px;text-align:center;top:204px;font-size:12px;line-height:1;transform:scaleX(.84);">F</div>
<div style="left:640px;top:201px;width:1px;height:18px;background:#a0a0a0;"></div>
<div style="left:641px;top:201px;width:1px;height:18px;background:#fff;"></div>
<div class="song" style="left:607.0px;width:40px;text-align:center;top:204px;font-size:12px;line-height:1;transform:scaleX(.84);">G</div>
<div style="left:667px;top:201px;width:1px;height:18px;background:#a0a0a0;"></div>
<div style="left:668px;top:201px;width:1px;height:18px;background:#fff;"></div>
<div class="song" style="left:634.0px;width:40px;text-align:center;top:204px;font-size:12px;line-height:1;transform:scaleX(.84);">H</div>
<div style="left:717px;top:201px;width:1px;height:18px;background:#a0a0a0;"></div>
<div style="left:718px;top:201px;width:1px;height:18px;background:#fff;"></div>
<div class="song" style="left:672.5px;width:40px;text-align:center;top:204px;font-size:12px;line-height:1;transform:scaleX(.84);">I</div>
<div style="left:743px;top:201px;width:1px;height:18px;background:#a0a0a0;"></div>
<div style="left:744px;top:201px;width:1px;height:18px;background:#fff;"></div>
<div class="song" style="left:710.5px;width:40px;text-align:center;top:204px;font-size:12px;line-height:1;transform:scaleX(.84);">J</div>
<div style="left:769px;top:201px;width:1px;height:18px;background:#a0a0a0;"></div>
<div style="left:770px;top:201px;width:1px;height:18px;background:#fff;"></div>
<div class="song" style="left:736.5px;width:40px;text-align:center;top:204px;font-size:12px;line-height:1;transform:scaleX(.84);">K</div>
<div style="left:796px;top:201px;width:1px;height:18px;background:#a0a0a0;"></div>
<div style="left:797px;top:201px;width:1px;height:18px;background:#fff;"></div>
<div class="song" style="left:763.0px;width:40px;text-align:center;top:204px;font-size:12px;line-height:1;transform:scaleX(.84);">L</div>
<div style="left:827px;top:201px;width:1px;height:18px;background:#a0a0a0;"></div>
<div style="left:828px;top:201px;width:1px;height:18px;background:#fff;"></div>
<div class="song" style="left:792.0px;width:40px;text-align:center;top:204px;font-size:12px;line-height:1;transform:scaleX(.84);">M</div>
<div style="left:852px;top:201px;width:1px;height:18px;background:#a0a0a0;"></div>
<div style="left:853px;top:201px;width:1px;height:18px;background:#fff;"></div>
<div class="song" style="left:820.0px;width:40px;text-align:center;top:204px;font-size:12px;line-height:1;transform:scaleX(.84);">N</div>
<div style="left:876px;top:201px;width:1px;height:18px;background:#a0a0a0;"></div>
<div style="left:877px;top:201px;width:1px;height:18px;background:#fff;"></div>
<div class="song" style="left:844.5px;width:40px;text-align:center;top:204px;font-size:12px;line-height:1;transform:scaleX(.84);">O</div>
<div style="left:900px;top:201px;width:1px;height:18px;background:#a0a0a0;"></div>
<div style="left:901px;top:201px;width:1px;height:18px;background:#fff;"></div>
<div class="song" style="left:868.5px;width:40px;text-align:center;top:204px;font-size:12px;line-height:1;transform:scaleX(.84);">P</div>
<div style="left:924px;top:201px;width:1px;height:18px;background:#a0a0a0;"></div>
<div style="left:925px;top:201px;width:1px;height:18px;background:#fff;"></div>
<div class="song" style="left:892.5px;width:40px;text-align:center;top:204px;font-size:12px;line-height:1;transform:scaleX(.84);">Q</div>
<div style="left:948px;top:201px;width:1px;height:18px;background:#a0a0a0;"></div>
<div style="left:949px;top:201px;width:1px;height:18px;background:#fff;"></div>
<div class="song" style="left:916.5px;width:40px;text-align:center;top:204px;font-size:12px;line-height:1;transform:scaleX(.84);">R</div>
<div style="left:971px;top:201px;width:1px;height:18px;background:#a0a0a0;"></div>
<div style="left:972px;top:201px;width:1px;height:18px;background:#fff;"></div>
<div class="song" style="left:940.0px;width:40px;text-align:center;top:204px;font-size:12px;line-height:1;transform:scaleX(.84);">S</div>
<div style="left:994px;top:201px;width:1px;height:18px;background:#a0a0a0;"></div>
<div style="left:995px;top:201px;width:1px;height:18px;background:#fff;"></div>
<div class="song" style="left:963.0px;width:40px;text-align:center;top:204px;font-size:12px;line-height:1;transform:scaleX(.84);">T</div>
<div style="left:1017px;top:201px;width:1px;height:18px;background:#a0a0a0;"></div>
<div style="left:1018px;top:201px;width:1px;height:18px;background:#fff;"></div>
<div class="song" style="left:986.0px;width:40px;text-align:center;top:204px;font-size:12px;line-height:1;transform:scaleX(.84);">U</div>
<div style="left:1040px;top:201px;width:1px;height:18px;background:#a0a0a0;"></div>
<div style="left:1041px;top:201px;width:1px;height:18px;background:#fff;"></div>
<div class="song" style="left:1009.0px;width:40px;text-align:center;top:204px;font-size:12px;line-height:1;transform:scaleX(.84);">V</div>
<div style="left:1063px;top:201px;width:1px;height:18px;background:#a0a0a0;"></div>
<div style="left:1064px;top:201px;width:1px;height:18px;background:#fff;"></div>
<div class="song" style="left:1032.0px;width:40px;text-align:center;top:204px;font-size:12px;line-height:1;transform:scaleX(.84);">W</div>
<div style="left:1089px;top:201px;width:1px;height:18px;background:#a0a0a0;"></div>
<div style="left:1090px;top:201px;width:1px;height:18px;background:#fff;"></div>
<div class="song" style="left:1056.5px;width:40px;text-align:center;top:204px;font-size:12px;line-height:1;transform:scaleX(.84);">X</div>
<div style="left:1118px;top:201px;width:1px;height:18px;background:#a0a0a0;"></div>
<div style="left:1119px;top:201px;width:1px;height:18px;background:#fff;"></div>
<div class="song" style="left:1084.0px;width:40px;text-align:center;top:204px;font-size:12px;line-height:1;transform:scaleX(.84);">Y</div>
<div style="left:1147px;top:201px;width:1px;height:18px;background:#a0a0a0;"></div>
<div style="left:1148px;top:201px;width:1px;height:18px;background:#fff;"></div>
<div class="song" style="left:1113.0px;width:40px;text-align:center;top:204px;font-size:12px;line-height:1;transform:scaleX(.84);">Z</div>
<div style="left:1176px;top:201px;width:1px;height:18px;background:#a0a0a0;"></div>
<div style="left:1177px;top:201px;width:1px;height:18px;background:#fff;"></div>
<div class="song" style="left:1142.0px;width:40px;text-align:center;top:204px;font-size:12px;line-height:1;transform:scaleX(.84);">AA</div>
<div style="left:1181px;top:201px;width:1px;height:18px;background:#a0a0a0;"></div>
<div style="left:441px;top:220px;width:32px;height:580px;background:#f0f0f0;"></div>
<div style="left:442px;top:224px;width:31px;height:1px;background:#c4bca6;"></div>
<div style="left:442px;top:254px;width:31px;height:1px;background:#c4bca6;"></div>
<div style="left:442px;top:284px;width:31px;height:1px;background:#c4bca6;"></div>
<div style="left:442px;top:314px;width:31px;height:1px;background:#c4bca6;"></div>
<div style="left:442px;top:319px;width:31px;height:1px;background:#c4bca6;"></div>
<div style="left:442px;top:369px;width:31px;height:1px;background:#c4bca6;"></div>
<div style="left:442px;top:419px;width:31px;height:1px;background:#c4bca6;"></div>
<div style="left:442px;top:469px;width:31px;height:1px;background:#c4bca6;"></div>
<div style="left:442px;top:519px;width:31px;height:1px;background:#c4bca6;"></div>
<div style="left:442px;top:567px;width:31px;height:1px;background:#c4bca6;"></div>
<div style="left:442px;top:663px;width:31px;height:1px;background:#c4bca6;"></div>
<div style="left:442px;top:759px;width:31px;height:1px;background:#c4bca6;"></div>
<div style="left:448px;top:220px;width:2px;height:2px;background:#000;"></div>
<div class="c" style="left:457.500px;top:233px;font-size:13px;font-weight:bold;font-family:Liberation Serif,serif;letter-spacing:0px;text-indent:0px;">2</div>
<div class="c" style="left:457.500px;top:263px;font-size:13px;font-weight:bold;font-family:Liberation Serif,serif;letter-spacing:0px;text-indent:0px;">3</div>
<div class="c" style="left:457.500px;top:293px;font-size:13px;font-weight:bold;font-family:Liberation Serif,serif;letter-spacing:0px;text-indent:0px;">4</div>
<div class="c" style="left:457.500px;top:338px;font-size:13px;font-weight:bold;font-family:Liberation Serif,serif;letter-spacing:0px;text-indent:0px;">6</div>
<div class="c" style="left:457.500px;top:388px;font-size:13px;font-weight:bold;font-family:Liberation Serif,serif;letter-spacing:0px;text-indent:0px;">7</div>
<div class="c" style="left:457.500px;top:438px;font-size:13px;font-weight:bold;font-family:Liberation Serif,serif;letter-spacing:0px;text-indent:0px;">8</div>
<div class="c" style="left:457.500px;top:488px;font-size:13px;font-weight:bold;font-family:Liberation Serif,serif;letter-spacing:0px;text-indent:0px;">9</div>
<div class="c" style="left:457.500px;top:537px;font-size:13px;font-weight:bold;font-family:Liberation Serif,serif;letter-spacing:1.5px;text-indent:1.5px;">10</div>
<div class="c" style="left:457.500px;top:609px;font-size:13px;font-weight:bold;font-family:Liberation Serif,serif;letter-spacing:1.5px;text-indent:1.5px;">11</div>
<div class="c" style="left:457.500px;top:705px;font-size:13px;font-weight:bold;font-family:Liberation Serif,serif;letter-spacing:1.5px;text-indent:1.5px;">12</div>
<svg style="left:454px;top:316px" width="7" height="3"><path d="M0 2.500c1-2.500 2.500-2.500 3.500-1.500s2 1 3 1" stroke="#000" stroke-width="1.500" fill="none"/></svg>
<div style="left:473px;top:219px;width:2px;height:581px;background:#000;"></div>
<div style="left:475px;top:220px;width:2px;height:580px;background:#fbfbfb;"></div>
<div style="left:477px;top:220px;width:3px;height:99px;background:#0a0a0a;"></div>
<div style="left:475px;top:219px;width:4px;height:2px;background:#0a0a0a;"></div>
<div style="left:477px;top:319px;width:2px;height:481px;background:#f4f4f4;"></div>
<div style="left:480px;top:220px;width:697px;height:580px;background:#e0e0e0;"></div>
<div style="left:1177px;top:220px;width:5px;height:580px;background:#e6e6e6;"></div>
<div style="left:480px;top:220px;width:697px;height:5px;background:#dadada;"></div>
<div style="left:480px;top:224px;width:697px;height:1px;background:#ececec;"></div>
<div style="left:480px;top:284px;width:697px;height:1px;background:#ececec;"></div>
<div style="left:480px;top:314px;width:697px;height:1px;background:#ececec;"></div>
<div style="left:1040px;top:285px;width:1px;height:29px;background:#ececec;"></div>
<div style="left:1118px;top:285px;width:58px;height:29px;background:#fff;"></div>
<div style="left:505px;top:315px;width:1px;height:3px;background:#ececec;"></div>
<div style="left:532px;top:315px;width:1px;height:3px;background:#ececec;"></div>
<div style="left:559px;top:315px;width:1px;height:3px;background:#ececec;"></div>
<div style="left:586px;top:315px;width:1px;height:3px;background:#ececec;"></div>
<div style="left:613px;top:315px;width:1px;height:3px;background:#ececec;"></div>
<div style="left:640px;top:315px;width:1px;height:3px;background:#ececec;"></div>
<div style="left:667px;top:315px;width:1px;height:3px;background:#ececec;"></div>
<div style="left:717px;top:315px;width:1px;height:3px;background:#ececec;"></div>
<div style="left:743px;top:315px;width:1px;height:3px;background:#ececec;"></div>
<div style="left:769px;top:315px;width:1px;height:3px;background:#ececec;"></div>
<div style="left:796px;top:315px;width:1px;height:3px;background:#ececec;"></div>
<div style="left:827px;top:315px;width:1px;height:3px;background:#ececec;"></div>
<div style="left:852px;top:315px;width:1px;height:3px;background:#ececec;"></div>
<div style="left:876px;top:315px;width:1px;height:3px;background:#ececec;"></div>
<div style="left:900px;top:315px;width:1px;height:3px;background:#ececec;"></div>
<div style="left:924px;top:315px;width:1px;height:3px;background:#ececec;"></div>
<div style="left:948px;top:315px;width:1px;height:3px;background:#ececec;"></div>
<div style="left:971px;top:315px;width:1px;height:3px;background:#ececec;"></div>
<div style="left:994px;top:315px;width:1px;height:3px;background:#ececec;"></div>
<div style="left:1017px;top:315px;width:1px;height:3px;background:#ececec;"></div>
<div style="left:1040px;top:315px;width:1px;height:3px;background:#ececec;"></div>
<div style="left:1063px;top:315px;width:1px;height:3px;background:#ececec;"></div>
<div style="left:1089px;top:315px;width:1px;height:3px;background:#ececec;"></div>
<div style="left:1118px;top:315px;width:1px;height:3px;background:#ececec;"></div>
<div style="left:1147px;top:315px;width:1px;height:3px;background:#ececec;"></div>
<div class="c" style="left:827px;top:245px;font-size:22px;color:#101010;">基坑开挖检验批质量验收记录</div>
<div class="t bm" style="left:1090px;top:294px;font-size:12px;letter-spacing:1px;">编号</div>
<div style="left:614px;top:320px;width:334px;height:199px;background:#f1c8a5;"></div>
<div style="left:1064px;top:320px;width:112px;height:199px;background:#f1c8a5;"></div>
<div style="left:1064px;top:568px;width:112px;height:232px;background:#f1c8a5;"></div>
<div style="left:828px;top:568px;width:235px;height:232px;background:#fff;"></div>
<div style="left:479px;top:318px;width:698px;height:2px;background:#000;"></div>
<div style="left:479px;top:318px;width:1px;height:482px;background:#000;"></div>
<div style="left:1175px;top:318px;width:2px;height:482px;background:#000;"></div>
<div style="left:480px;top:369px;width:696px;height:1px;background:#000;"></div>
<div style="left:480px;top:419px;width:696px;height:1px;background:#000;"></div>
<div style="left:480px;top:469px;width:696px;height:1px;background:#000;"></div>
<div style="left:480px;top:519px;width:696px;height:1px;background:#000;"></div>
<div style="left:480px;top:567px;width:696px;height:1px;background:#000;"></div>
<div style="left:613px;top:320px;width:1px;height:199px;background:#000;"></div>
<div style="left:948px;top:320px;width:1px;height:199px;background:#000;"></div>
<div style="left:1063px;top:320px;width:1px;height:480px;background:#000;"></div>
<div style="left:827px;top:520px;width:1px;height:280px;background:#000;"></div>
<div style="left:505px;top:568px;width:1px;height:232px;background:#000;"></div>
<div style="left:532px;top:568px;width:1px;height:232px;background:#000;"></div>
<div style="left:559px;top:568px;width:1px;height:232px;background:#000;"></div>
<div style="left:613px;top:568px;width:1px;height:191px;background:#000;"></div>
<div style="left:717px;top:568px;width:1px;height:232px;background:#000;"></div>
<div style="left:852px;top:568px;width:1px;height:232px;background:#000;"></div>
<div style="left:876px;top:568px;width:1px;height:232px;background:#000;"></div>
<div style="left:900px;top:568px;width:1px;height:232px;background:#000;"></div>
<div style="left:924px;top:568px;width:1px;height:232px;background:#000;"></div>
<div style="left:948px;top:568px;width:1px;height:232px;background:#000;"></div>
<div style="left:971px;top:568px;width:1px;height:232px;background:#000;"></div>
<div style="left:994px;top:568px;width:1px;height:232px;background:#000;"></div>
<div style="left:1017px;top:568px;width:1px;height:232px;background:#000;"></div>
<div style="left:1040px;top:568px;width:1px;height:232px;background:#000;"></div>
<div style="left:613px;top:663px;width:450px;height:1px;background:#000;"></div>
<div style="left:559px;top:759px;width:504px;height:1px;background:#000;"></div>
<div class="c bm" style="left:546.5px;top:339px;font-size:12px;letter-spacing:1px;">工程名称</div>
<div class="c bm" style="left:546.5px;top:389px;font-size:12px;letter-spacing:1px;">分项工程名称</div>
<div class="c bm" style="left:546.5px;top:439px;font-size:12px;letter-spacing:1px;">施工单位</div>
<div class="c bm" style="left:546.5px;top:482px;font-size:12px;letter-spacing:1px;">施工执行标准</div>
<div class="c bm" style="left:546.5px;top:495px;font-size:12px;letter-spacing:1px;">名称及编号</div>
<div class="c bm" style="left:1006.5px;top:339px;font-size:12px;letter-spacing:1px;">验收部位</div>
<div class="c bm" style="left:1006.5px;top:389px;font-size:12px;letter-spacing:1px;">施工班组长</div>
<div class="c bm" style="left:1006.5px;top:439px;font-size:12px;letter-spacing:1px;">专业工长</div>
<div class="c bm" style="left:1006.5px;top:489px;font-size:12px;letter-spacing:1px;">项目经理</div>
<div class="c bm" style="left:654px;top:538px;font-size:12px;letter-spacing:1px;">质量验收规范的规定</div>
<div class="c bm" style="left:945.5px;top:538px;font-size:12px;letter-spacing:1px;">施工单位检查评定记录</div>
<div class="c bm" style="left:1120px;top:531px;font-size:12px;letter-spacing:1px;">监理<span style="letter-spacing:-1px">(</span>建设<span style="letter-spacing:-1px">)</span></div>
<div class="c bm" style="left:1120px;top:544px;font-size:12px;letter-spacing:1px;">单位验收记录</div>
<div class="c bm" style="left:666px;top:610px;font-size:12px;letter-spacing:1px;">土方</div>
<div class="c bm" style="left:666px;top:706px;font-size:12px;letter-spacing:1px;">石方</div>
<div class="c bm" style="left:772px;top:603px;font-size:12px;letter-spacing:1px;letter-spacing:-.2px;">0</div>
<div class="c bm" style="left:772px;top:616px;font-size:12px;letter-spacing:1px;letter-spacing:-.2px;">−20</div>
<div class="c bm" style="left:772px;top:699px;font-size:12px;letter-spacing:1px;letter-spacing:-.2px;">+50</div>
<div class="c bm" style="left:772px;top:712px;font-size:12px;letter-spacing:1px;letter-spacing:-.2px;">−200</div>
<div class="c bm" style="left:587px;top:651px;font-size:12px;letter-spacing:1px;">基底</div>
<div class="c bm" style="left:587px;top:664px;font-size:12px;letter-spacing:1px;">高程</div>
<div class="c bm" style="left:493px;top:735.5px;font-size:12px;letter-spacing:1px;letter-spacing:0;">一</div>
<div class="c bm" style="left:493px;top:748.0px;font-size:12px;letter-spacing:1px;letter-spacing:0;">般</div>
<div class="c bm" style="left:493px;top:760.5px;font-size:12px;letter-spacing:1px;letter-spacing:0;">项</div>
<div class="c bm" style="left:493px;top:773.0px;font-size:12px;letter-spacing:1px;letter-spacing:0;">目</div>
<div class="c bm" style="left:519.5px;top:754px;font-size:12px;letter-spacing:1px;letter-spacing:0;font-family:Liberation Serif,serif;">1</div>
<div class="c bm" style="left:546.5px;top:702px;font-size:12px;letter-spacing:1px;letter-spacing:0;">基</div>
<div class="c bm" style="left:546.5px;top:715px;font-size:12px;letter-spacing:1px;letter-spacing:0;">坑</div>
<div class="c bm" style="left:546.5px;top:728px;font-size:12px;letter-spacing:1px;letter-spacing:0;">开</div>
<div class="c bm" style="left:546.5px;top:741px;font-size:12px;letter-spacing:1px;letter-spacing:0;">挖</div>
<div class="c bm" style="left:546.5px;top:754px;font-size:12px;letter-spacing:1px;letter-spacing:0;">允</div>
<div class="c bm" style="left:546.5px;top:767px;font-size:12px;letter-spacing:1px;letter-spacing:0;">许</div>
<div class="c bm" style="left:546.5px;top:780px;font-size:12px;letter-spacing:1px;letter-spacing:0;">偏</div>
<div class="c bm" style="left:546.5px;top:793px;font-size:12px;letter-spacing:1px;letter-spacing:0;">差</div>
<div style="left:932px;top:498px;width:155px;height:16px;background:#c8c8c8;"></div>
<div class="t song" style="left:933px;top:499px;font-size:14px;letter-spacing:.4px;"><b>未经授权<span style="font-family:Liberation Sans,sans-serif;font-size:13px;letter-spacing:.15px">[UnAuthorized]</span></b></div>
<div style="left:1578px;top:201px;width:18px;height:599px;background-color:#f8f8f8;background-image:repeating-conic-gradient(#ececec 0 25%,#ffffff 0 50%);background-size:2px 2px;"></div>
<div style="left:1578px;top:201px;width:18px;height:17px;background:#f0f0f0;border-right:2px solid #707070;border-bottom:2px solid #707070;border-left:1px solid #fff;border-top:1px solid #fff;"></div>
<svg style="left:1582px;top:206px" width="9" height="6"><path d="M0 5.500h9l-4.500-5.500z" fill="#000"/></svg>
<div style="left:1578px;top:794px;width:18px;height:8px;background:#f0f0f0;border-right:2px solid #707070;border-left:1px solid #fff;border-top:1px solid #fff;"></div>
<div style="left:1596px;top:200px;width:1px;height:600px;background:#7c7c7c;"></div>
<div style="left:1578px;top:218px;width:18px;height:329px;background:#f0f0f0;border-right:2px solid #707070;border-bottom:2px solid #707070;border-left:2px solid #fff;border-top:1px solid #fff;"></div>
</body></html>
